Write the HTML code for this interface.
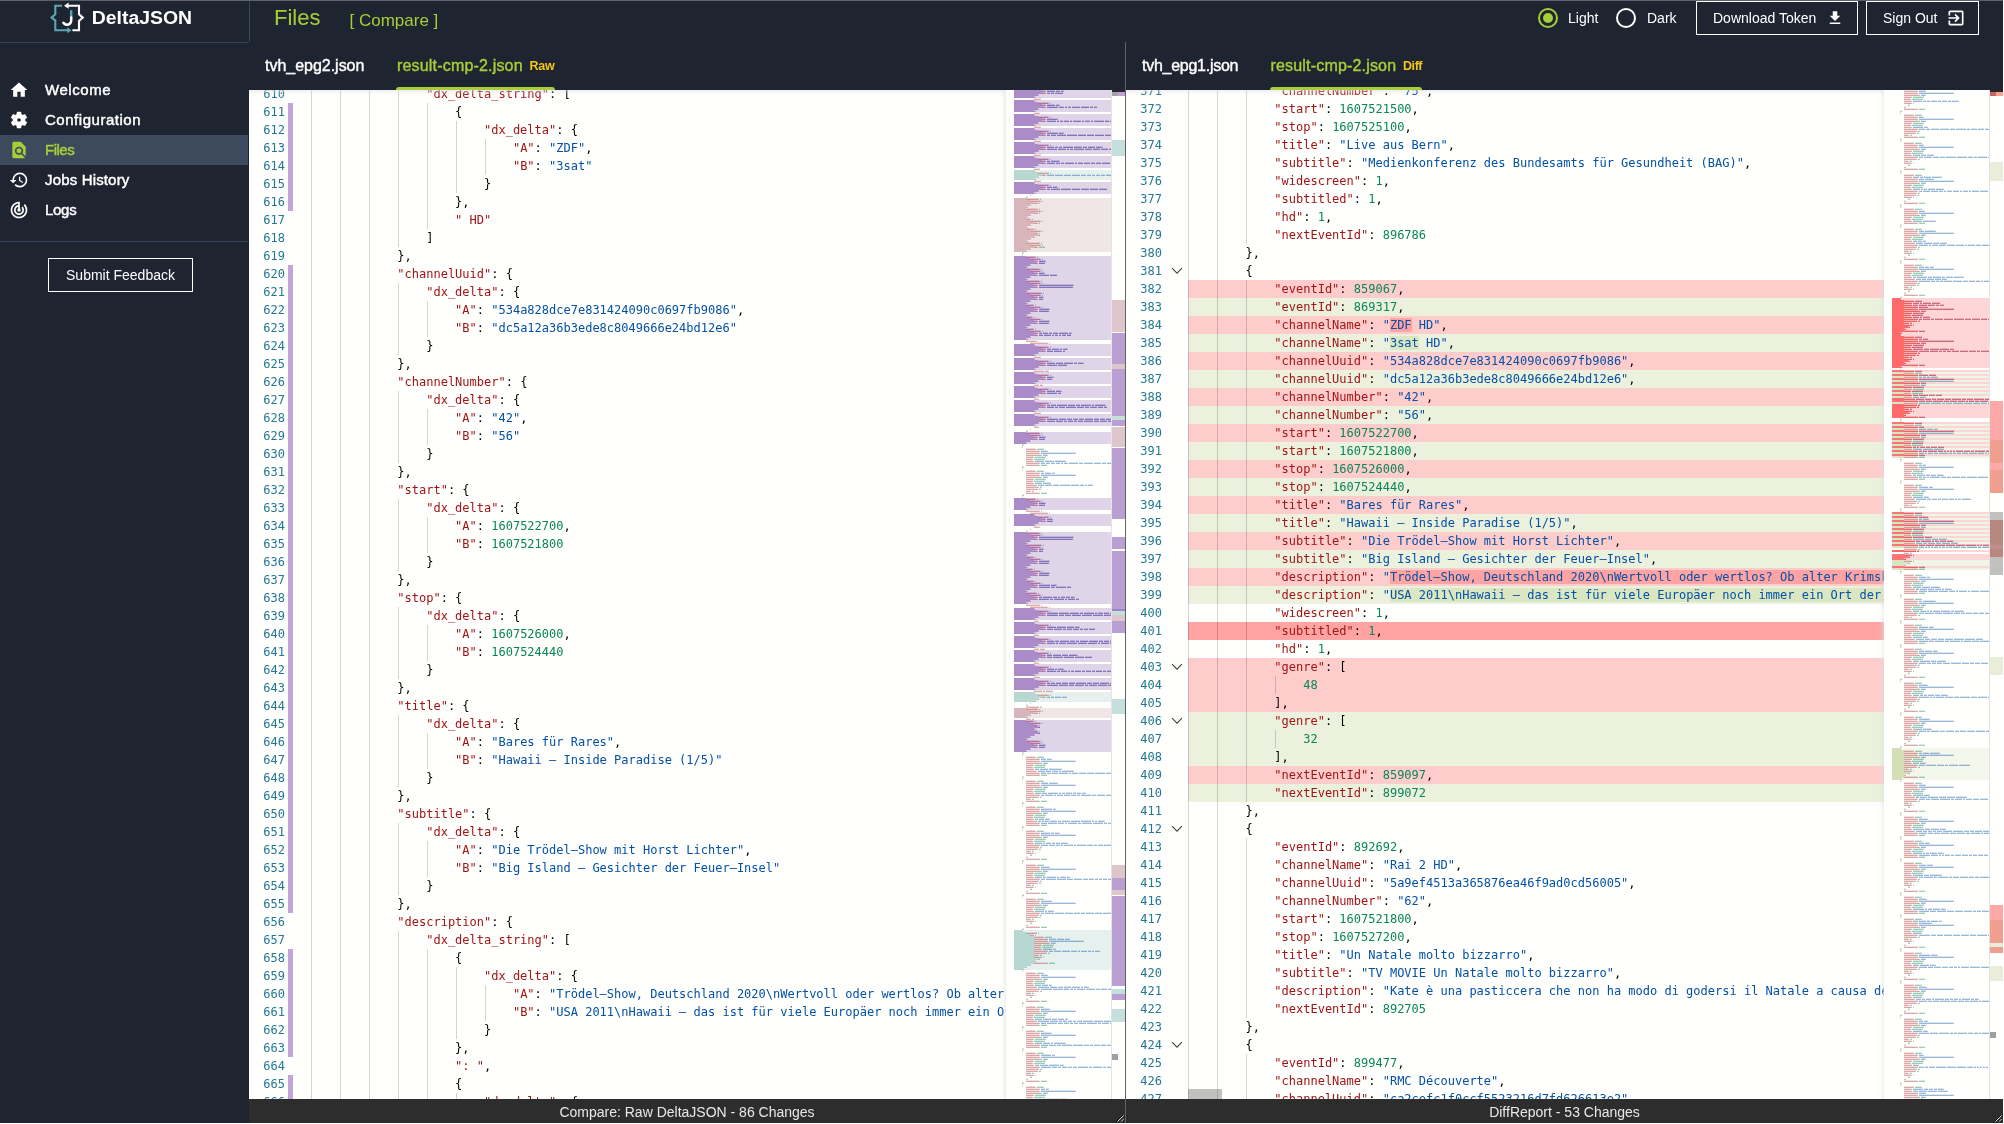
<!DOCTYPE html>
<html lang="en"><head><meta charset="utf-8"><title>DeltaJSON</title>
<style>
*{box-sizing:border-box;margin:0;padding:0}
html,body{width:2004px;height:1124px;overflow:hidden;background:#1e2430}
body{position:relative;font-family:"Liberation Sans",sans-serif;color:#fff}
.abs{position:absolute}
#topline{position:absolute;left:0;top:0;width:2003px;height:1px;background:#5d626c}
#bottomline{position:absolute;left:0;top:1122.7px;width:2004px;height:1.3px;background:#fff}
#sidebar{position:absolute;left:0;top:1px;width:248px;height:1123px;background:#1e2430}
#sb-hr1{position:absolute;left:0;top:41px;width:248px;height:1px;background:#36455b}
#sb-hr2{position:absolute;left:0;top:240px;width:248px;height:1px;background:#36455b}
#hd-vl{position:absolute;left:249px;top:1px;width:1px;height:41px;background:#3b475a}
#logo-t{position:absolute;left:91.5px;top:6px;font-size:17.5px;font-weight:bold;letter-spacing:0;line-height:24px;white-space:nowrap;transform:scaleX(1.108);transform-origin:0 0}
.nav{position:absolute;left:0;width:248px;height:30px}
.nav.act{background:#3d4a5d}
.nav span{position:absolute;left:45px;top:0;line-height:30px;font-size:15px;white-space:nowrap;-webkit-text-stroke:0.45px currentColor}
.nav.act span{color:#a6ce39}
.nav svg{position:absolute;left:9px;top:5px}
#fb{position:absolute;left:48px;top:257px;width:145px;height:34px;border:1px solid #fff;font-size:14px;line-height:32px;text-align:center;color:#fff}
#h-files{position:absolute;left:274px;top:4px;font-size:22px;line-height:28px;color:#a6ce39}
#h-cmp{position:absolute;left:349.5px;top:10px;font-size:17px;line-height:22px;color:#a6ce39;white-space:nowrap}
.rad{position:absolute;top:8px;width:20px;height:20px;border-radius:50%;border:2px solid #fff}
.rad.on{border-color:#a6ce39}
.rad.on::after{content:"";position:absolute;left:3px;top:3px;width:10px;height:10px;border-radius:50%;background:#a6ce39}
.hl{position:absolute;top:10px;font-size:14px;line-height:16px;color:#fff}
.hb{position:absolute;top:1px;height:34px;border:1px solid #fff;font-size:14px;line-height:32px;color:#fff;white-space:nowrap}
.hb span{position:absolute;top:0}
.tab{position:absolute;top:52px;font-size:16px;line-height:28px;white-space:nowrap;color:#fff;-webkit-text-stroke:0.4px currentColor}
.tab.g{color:#a6ce39}
.tab.y{color:#f5c518;font-size:12.5px;font-weight:bold;-webkit-text-stroke:0;top:52.4px}
.tul{position:absolute;top:87px;height:3px;background:#a6ce39;border-radius:3px 3px 0 0}
#vdiv{position:absolute;left:1125px;top:42px;width:1px;height:1081px;background:#626262}
#rdiv{position:absolute;left:2003px;top:0;width:1px;height:1124px;background:#fff}
.ed{position:absolute;top:90px;height:1009px;background:#fffffe;overflow:hidden;font-family:"DejaVu Sans Mono","Liberation Mono",monospace;font-size:12px;line-height:18px;color:#000}
.ed .ln{position:absolute;left:0;height:18px;text-align:right;color:#237893;white-space:pre}
.ed .cl{position:absolute;height:18px;white-space:pre;overflow:hidden}
.ed .ig{position:absolute;top:0;width:1px;height:18px;background:rgba(0,0,0,.17)}
.ed .tx{position:relative;left:-0.4px}
.k{color:#a31515}.s{color:#0451a5}.n{color:#098658}
.ld{background:#ffcccc}.li{background:#ebf1dd}.lD{background:#ffa3a3}
.cd{background:#ffa3a3}.ci{background:#dbe6c2}
#edL .ln{width:36px}
#edL .cl{left:62px;width:695px}
#edL .pb{position:absolute;left:39px;width:5px;height:18px;background:#c3a5d8}
#edR .ln{width:36px}
#edR .cl{left:62px;width:696px}
#edR .fa{position:absolute;left:45px}
.shadow-top{position:absolute;left:0;top:0;height:6px;box-shadow:#ddd 0 6px 6px -6px inset}
.mm{position:absolute;top:0;height:1009px;background:#fffffe}
.mmsh{position:absolute;top:0;width:6px;height:1009px;box-shadow:#ddd -6px 0 6px -6px inset}
.ov{position:absolute;top:0;width:14px;height:1009px;background:#fffffe;border-left:1px solid #e4e4e4}
.ov i,.mm i{position:absolute;display:block}
.sbar{position:absolute;top:1099px;height:23.5px;background:#2d2d2d;color:#e8e8e8;font-size:14px;line-height:26px;text-align:center}
.hsl{position:absolute;background:rgba(100,100,100,.4)}

#root{position:absolute;left:0;top:0;width:2004px;height:1124px;will-change:transform}

</style></head>
<body>
<div id="root">
<div id="sidebar">
  <svg class="abs" style="left:44px;top:-1px;will-change:transform" width="160" height="40" viewBox="44 0 160 40">
    <g fill="none" stroke-width="2.1" stroke-linejoin="miter">
      <path d="M62 5.7 H55.3 V14.2 L51.6 17.4 L55.3 20.6 V30.3 H68" stroke="#5ba6b3"/>
      <path d="M71.2 10.2 V18" stroke="#5ba6b3" stroke-width="2.4"/>
      <path d="M71.2 17.4 V20.6 a4.1 4.1 0 0 1 -4.1 4.1 a4.4 4.4 0 0 1 -3.7 -2" stroke="#fff" stroke-width="2.5" stroke-linecap="round"/>
      <path d="M68 5.7 H79 V14.2 L82.8 17.6 L79 21 V30.3 H72.4" stroke="#fff"/>
    </g>
    <path d="M71.6 30.3 l-4.4 -3 v6z" fill="#5ba6b3"/>
    <path d="M64 5.7 l4.6 -3.1 v6.2z" fill="#fff"/>
    <text x="91.8" y="24" font-family="Liberation Sans, sans-serif" font-weight="bold" font-size="17.5" fill="#fff" textLength="100.3" lengthAdjust="spacingAndGlyphs">DeltaJSON</text>
  </svg>
  <div id="sb-hr1"></div>
  <div class="nav" style="top:74px"><svg width="20" height="20" viewBox="0 0 24 24"><path fill="#fff" d="M10 20v-6h4v6h5v-8h3L12 3 2 12h3v8z"/></svg><span style="letter-spacing:.55px">Welcome</span></div>
  <div class="nav" style="top:104px"><svg width="20" height="20" viewBox="0 0 24 24"><path fill="#fff" fill-rule="evenodd" stroke="#fff" stroke-width="1.6" stroke-linejoin="round" d="M14.17 5.45 L13.85 2.89 L10.15 2.89 L9.83 5.45 L7.41 6.85 L5.03 5.84 L3.18 9.04 L5.24 10.60 L5.24 13.40 L3.18 14.96 L5.03 18.16 L7.41 17.15 L9.83 18.55 L10.15 21.11 L13.85 21.11 L14.17 18.55 L16.59 17.15 L18.97 18.16 L20.82 14.96 L18.76 13.40 L18.76 10.60 L20.82 9.04 L18.97 5.84 L16.59 6.85Z M9.00 12.00 a3.00 3.00 0 1 0 6.00 0 a3.00 3.00 0 1 0 -6.00 0Z"/></svg><span style="letter-spacing:.53px">Configuration</span></div>
  <div class="nav act" style="top:134px"><svg width="20" height="20" viewBox="0 0 24 24"><path fill="#a6ce39" d="M20 19.59V8l-6-6H6c-1.1 0-1.99.9-1.99 2L4 20c0 1.1.89 2 1.99 2H18c.45 0 .85-.15 1.19-.4l-4.43-4.43c-.8.52-1.74.83-2.76.83-2.76 0-5-2.24-5-5s2.24-5 5-5 5 2.24 5 5c0 1.02-.31 1.96-.83 2.75L20 19.59zM9 13c0 1.66 1.34 3 3 3s3-1.34 3-3-1.34-3-3-3-3 1.34-3 3z"/></svg><span style="letter-spacing:-.5px">Files</span></div>
  <div class="nav" style="top:164px"><svg width="20" height="20" viewBox="0 0 24 24"><path fill="#fff" d="M13 3a9 9 0 0 0-9 9H1l3.89 3.89.07.14L9 12H6c0-3.87 3.13-7 7-7s7 3.13 7 7-3.13 7-7 7c-1.93 0-3.68-.79-4.94-2.06l-1.42 1.42A8.954 8.954 0 0 0 13 21a9 9 0 0 0 0-18zm-1 5v5l4.28 2.54.72-1.21-3.5-2.08V8H12z"/></svg><span style="letter-spacing:.16px">Jobs History</span></div>
  <div class="nav" style="top:194px"><svg width="20" height="20" viewBox="0 0 24 24"><path fill="#fff" d="M19.07 4.93l-1.41 1.41A8.014 8.014 0 0 1 20 12c0 4.42-3.58 8-8 8s-8-3.58-8-8c0-4.08 3.05-7.44 7-7.93v2.02C8.160 6.570 6 9.030 6 12c0 3.310 2.690 6 6 6s6-2.690 6-6c0-1.660-.670-3.160-1.760-4.240l-1.410 1.410C15.550 9.900 16 10.900 16 12c0 2.210-1.790 4-4 4s-4-1.790-4-4c0-1.860 1.280-3.410 3-3.860v2.140c-.6.350-1 .980-1 1.720 0 1.100.9 2 2 2s2-.9 2-2c0-.740-.4-1.380-1-1.720V2h-1C6.480 2 2 6.480 2 12s4.480 10 10 10 10-4.480 10-10c0-2.760-1.120-5.260-2.930-7.070z"/></svg><span style="letter-spacing:-.3px">Logs</span></div>
  <div id="sb-hr2"></div>
  <div id="fb">Submit Feedback</div>
</div>
<div id="hd-vl"></div>
<div id="h-files">Files</div>
<div id="h-cmp">[ Compare ]</div>
<div class="rad on" style="left:1538px"></div><div class="hl" style="left:1568px">Light</div>
<div class="rad" style="left:1616px"></div><div class="hl" style="left:1647px">Dark</div>
<div class="hb" style="left:1696px;width:162px"><span style="left:16px">Download Token</span>
  <svg class="abs" style="left:129px;top:7px" width="18" height="18" viewBox="0 0 24 24"><path fill="#fff" d="M19 9h-4V3H9v6H5l7 7 7-7zM5 18v2h14v-2H5z"/></svg></div>
<div class="hb" style="left:1866px;width:113px"><span style="left:16px">Sign Out</span>
  <svg class="abs" style="left:79px;top:6px" width="20" height="20" viewBox="0 0 24 24"><path fill="#fff" d="M10.09 15.59L11.5 17l5-5-5-5-1.410 1.410L12.670 11H3v2h9.670l-2.580 2.590zM19 3H5c-1.110 0-2 .9-2 2v4h2V5h14v14H5v-4H3v4c0 1.100.890 2 2 2h14c1.100 0 2-.9 2-2V5c0-1.100-.9-2-2-2z"/></svg></div>

<div class="tab" style="left:265px;letter-spacing:-.02px">tvh_epg2.json</div>
<div class="tab g" style="left:397px;letter-spacing:.18px">result-cmp-2.json</div>
<div class="tab y" style="left:529.5px;letter-spacing:-.23px">Raw</div>
<div class="tul" style="left:396px;width:159px"></div>
<div class="tab" style="left:1142px;letter-spacing:-.26px">tvh_epg1.json</div>
<div class="tab g" style="left:1270.5px;letter-spacing:.18px">result-cmp-2.json</div>
<div class="tab y" style="left:1403px;letter-spacing:-.43px">Diff</div>
<div class="tul" style="left:1270px;width:152px"></div>

<div class="ed" id="edL" style="left:249px;width:876px">
<div class="ln" style="top:-5px">610</div>
<div class="cl" style="top:-5px"><i class="ig" style="left:0px"></i><i class="ig" style="left:29px"></i><i class="ig" style="left:58px"></i><i class="ig" style="left:87px"></i><span class="tx">                <span class="k">"dx_delta_string"</span>: [</span></div>
<div class="ln" style="top:13px">611</div>
<i class="pb" style="top:13px"></i>
<div class="cl" style="top:13px"><i class="ig" style="left:0px"></i><i class="ig" style="left:29px"></i><i class="ig" style="left:58px"></i><i class="ig" style="left:87px"></i><i class="ig" style="left:116px"></i><span class="tx">                    {</span></div>
<div class="ln" style="top:31px">612</div>
<i class="pb" style="top:31px"></i>
<div class="cl" style="top:31px"><i class="ig" style="left:0px"></i><i class="ig" style="left:29px"></i><i class="ig" style="left:58px"></i><i class="ig" style="left:87px"></i><i class="ig" style="left:116px"></i><i class="ig" style="left:145px"></i><span class="tx">                        <span class="k">"dx_delta"</span>: {</span></div>
<div class="ln" style="top:49px">613</div>
<i class="pb" style="top:49px"></i>
<div class="cl" style="top:49px"><i class="ig" style="left:0px"></i><i class="ig" style="left:29px"></i><i class="ig" style="left:58px"></i><i class="ig" style="left:87px"></i><i class="ig" style="left:116px"></i><i class="ig" style="left:145px"></i><i class="ig" style="left:174px"></i><span class="tx">                            <span class="k">"A"</span>: <span class="s">"ZDF"</span>,</span></div>
<div class="ln" style="top:67px">614</div>
<i class="pb" style="top:67px"></i>
<div class="cl" style="top:67px"><i class="ig" style="left:0px"></i><i class="ig" style="left:29px"></i><i class="ig" style="left:58px"></i><i class="ig" style="left:87px"></i><i class="ig" style="left:116px"></i><i class="ig" style="left:145px"></i><i class="ig" style="left:174px"></i><span class="tx">                            <span class="k">"B"</span>: <span class="s">"3sat"</span></span></div>
<div class="ln" style="top:85px">615</div>
<i class="pb" style="top:85px"></i>
<div class="cl" style="top:85px"><i class="ig" style="left:0px"></i><i class="ig" style="left:29px"></i><i class="ig" style="left:58px"></i><i class="ig" style="left:87px"></i><i class="ig" style="left:116px"></i><i class="ig" style="left:145px"></i><span class="tx">                        }</span></div>
<div class="ln" style="top:103px">616</div>
<i class="pb" style="top:103px"></i>
<div class="cl" style="top:103px"><i class="ig" style="left:0px"></i><i class="ig" style="left:29px"></i><i class="ig" style="left:58px"></i><i class="ig" style="left:87px"></i><i class="ig" style="left:116px"></i><span class="tx">                    },</span></div>
<div class="ln" style="top:121px">617</div>
<div class="cl" style="top:121px"><i class="ig" style="left:0px"></i><i class="ig" style="left:29px"></i><i class="ig" style="left:58px"></i><i class="ig" style="left:87px"></i><i class="ig" style="left:116px"></i><span class="tx">                    <span class="k">" HD"</span></span></div>
<div class="ln" style="top:139px">618</div>
<div class="cl" style="top:139px"><i class="ig" style="left:0px"></i><i class="ig" style="left:29px"></i><i class="ig" style="left:58px"></i><i class="ig" style="left:87px"></i><span class="tx">                ]</span></div>
<div class="ln" style="top:157px">619</div>
<div class="cl" style="top:157px"><i class="ig" style="left:0px"></i><i class="ig" style="left:29px"></i><i class="ig" style="left:58px"></i><span class="tx">            },</span></div>
<div class="ln" style="top:175px">620</div>
<i class="pb" style="top:175px"></i>
<div class="cl" style="top:175px"><i class="ig" style="left:0px"></i><i class="ig" style="left:29px"></i><i class="ig" style="left:58px"></i><span class="tx">            <span class="k">"channelUuid"</span>: {</span></div>
<div class="ln" style="top:193px">621</div>
<i class="pb" style="top:193px"></i>
<div class="cl" style="top:193px"><i class="ig" style="left:0px"></i><i class="ig" style="left:29px"></i><i class="ig" style="left:58px"></i><i class="ig" style="left:87px"></i><span class="tx">                <span class="k">"dx_delta"</span>: {</span></div>
<div class="ln" style="top:211px">622</div>
<i class="pb" style="top:211px"></i>
<div class="cl" style="top:211px"><i class="ig" style="left:0px"></i><i class="ig" style="left:29px"></i><i class="ig" style="left:58px"></i><i class="ig" style="left:87px"></i><i class="ig" style="left:116px"></i><span class="tx">                    <span class="k">"A"</span>: <span class="s">"534a828dce7e831424090c0697fb9086"</span>,</span></div>
<div class="ln" style="top:229px">623</div>
<i class="pb" style="top:229px"></i>
<div class="cl" style="top:229px"><i class="ig" style="left:0px"></i><i class="ig" style="left:29px"></i><i class="ig" style="left:58px"></i><i class="ig" style="left:87px"></i><i class="ig" style="left:116px"></i><span class="tx">                    <span class="k">"B"</span>: <span class="s">"dc5a12a36b3ede8c8049666e24bd12e6"</span></span></div>
<div class="ln" style="top:247px">624</div>
<i class="pb" style="top:247px"></i>
<div class="cl" style="top:247px"><i class="ig" style="left:0px"></i><i class="ig" style="left:29px"></i><i class="ig" style="left:58px"></i><i class="ig" style="left:87px"></i><span class="tx">                }</span></div>
<div class="ln" style="top:265px">625</div>
<i class="pb" style="top:265px"></i>
<div class="cl" style="top:265px"><i class="ig" style="left:0px"></i><i class="ig" style="left:29px"></i><i class="ig" style="left:58px"></i><span class="tx">            },</span></div>
<div class="ln" style="top:283px">626</div>
<i class="pb" style="top:283px"></i>
<div class="cl" style="top:283px"><i class="ig" style="left:0px"></i><i class="ig" style="left:29px"></i><i class="ig" style="left:58px"></i><span class="tx">            <span class="k">"channelNumber"</span>: {</span></div>
<div class="ln" style="top:301px">627</div>
<i class="pb" style="top:301px"></i>
<div class="cl" style="top:301px"><i class="ig" style="left:0px"></i><i class="ig" style="left:29px"></i><i class="ig" style="left:58px"></i><i class="ig" style="left:87px"></i><span class="tx">                <span class="k">"dx_delta"</span>: {</span></div>
<div class="ln" style="top:319px">628</div>
<i class="pb" style="top:319px"></i>
<div class="cl" style="top:319px"><i class="ig" style="left:0px"></i><i class="ig" style="left:29px"></i><i class="ig" style="left:58px"></i><i class="ig" style="left:87px"></i><i class="ig" style="left:116px"></i><span class="tx">                    <span class="k">"A"</span>: <span class="s">"42"</span>,</span></div>
<div class="ln" style="top:337px">629</div>
<i class="pb" style="top:337px"></i>
<div class="cl" style="top:337px"><i class="ig" style="left:0px"></i><i class="ig" style="left:29px"></i><i class="ig" style="left:58px"></i><i class="ig" style="left:87px"></i><i class="ig" style="left:116px"></i><span class="tx">                    <span class="k">"B"</span>: <span class="s">"56"</span></span></div>
<div class="ln" style="top:355px">630</div>
<i class="pb" style="top:355px"></i>
<div class="cl" style="top:355px"><i class="ig" style="left:0px"></i><i class="ig" style="left:29px"></i><i class="ig" style="left:58px"></i><i class="ig" style="left:87px"></i><span class="tx">                }</span></div>
<div class="ln" style="top:373px">631</div>
<i class="pb" style="top:373px"></i>
<div class="cl" style="top:373px"><i class="ig" style="left:0px"></i><i class="ig" style="left:29px"></i><i class="ig" style="left:58px"></i><span class="tx">            },</span></div>
<div class="ln" style="top:391px">632</div>
<i class="pb" style="top:391px"></i>
<div class="cl" style="top:391px"><i class="ig" style="left:0px"></i><i class="ig" style="left:29px"></i><i class="ig" style="left:58px"></i><span class="tx">            <span class="k">"start"</span>: {</span></div>
<div class="ln" style="top:409px">633</div>
<i class="pb" style="top:409px"></i>
<div class="cl" style="top:409px"><i class="ig" style="left:0px"></i><i class="ig" style="left:29px"></i><i class="ig" style="left:58px"></i><i class="ig" style="left:87px"></i><span class="tx">                <span class="k">"dx_delta"</span>: {</span></div>
<div class="ln" style="top:427px">634</div>
<i class="pb" style="top:427px"></i>
<div class="cl" style="top:427px"><i class="ig" style="left:0px"></i><i class="ig" style="left:29px"></i><i class="ig" style="left:58px"></i><i class="ig" style="left:87px"></i><i class="ig" style="left:116px"></i><span class="tx">                    <span class="k">"A"</span>: <span class="n">1607522700</span>,</span></div>
<div class="ln" style="top:445px">635</div>
<i class="pb" style="top:445px"></i>
<div class="cl" style="top:445px"><i class="ig" style="left:0px"></i><i class="ig" style="left:29px"></i><i class="ig" style="left:58px"></i><i class="ig" style="left:87px"></i><i class="ig" style="left:116px"></i><span class="tx">                    <span class="k">"B"</span>: <span class="n">1607521800</span></span></div>
<div class="ln" style="top:463px">636</div>
<i class="pb" style="top:463px"></i>
<div class="cl" style="top:463px"><i class="ig" style="left:0px"></i><i class="ig" style="left:29px"></i><i class="ig" style="left:58px"></i><i class="ig" style="left:87px"></i><span class="tx">                }</span></div>
<div class="ln" style="top:481px">637</div>
<i class="pb" style="top:481px"></i>
<div class="cl" style="top:481px"><i class="ig" style="left:0px"></i><i class="ig" style="left:29px"></i><i class="ig" style="left:58px"></i><span class="tx">            },</span></div>
<div class="ln" style="top:499px">638</div>
<i class="pb" style="top:499px"></i>
<div class="cl" style="top:499px"><i class="ig" style="left:0px"></i><i class="ig" style="left:29px"></i><i class="ig" style="left:58px"></i><span class="tx">            <span class="k">"stop"</span>: {</span></div>
<div class="ln" style="top:517px">639</div>
<i class="pb" style="top:517px"></i>
<div class="cl" style="top:517px"><i class="ig" style="left:0px"></i><i class="ig" style="left:29px"></i><i class="ig" style="left:58px"></i><i class="ig" style="left:87px"></i><span class="tx">                <span class="k">"dx_delta"</span>: {</span></div>
<div class="ln" style="top:535px">640</div>
<i class="pb" style="top:535px"></i>
<div class="cl" style="top:535px"><i class="ig" style="left:0px"></i><i class="ig" style="left:29px"></i><i class="ig" style="left:58px"></i><i class="ig" style="left:87px"></i><i class="ig" style="left:116px"></i><span class="tx">                    <span class="k">"A"</span>: <span class="n">1607526000</span>,</span></div>
<div class="ln" style="top:553px">641</div>
<i class="pb" style="top:553px"></i>
<div class="cl" style="top:553px"><i class="ig" style="left:0px"></i><i class="ig" style="left:29px"></i><i class="ig" style="left:58px"></i><i class="ig" style="left:87px"></i><i class="ig" style="left:116px"></i><span class="tx">                    <span class="k">"B"</span>: <span class="n">1607524440</span></span></div>
<div class="ln" style="top:571px">642</div>
<i class="pb" style="top:571px"></i>
<div class="cl" style="top:571px"><i class="ig" style="left:0px"></i><i class="ig" style="left:29px"></i><i class="ig" style="left:58px"></i><i class="ig" style="left:87px"></i><span class="tx">                }</span></div>
<div class="ln" style="top:589px">643</div>
<i class="pb" style="top:589px"></i>
<div class="cl" style="top:589px"><i class="ig" style="left:0px"></i><i class="ig" style="left:29px"></i><i class="ig" style="left:58px"></i><span class="tx">            },</span></div>
<div class="ln" style="top:607px">644</div>
<i class="pb" style="top:607px"></i>
<div class="cl" style="top:607px"><i class="ig" style="left:0px"></i><i class="ig" style="left:29px"></i><i class="ig" style="left:58px"></i><span class="tx">            <span class="k">"title"</span>: {</span></div>
<div class="ln" style="top:625px">645</div>
<i class="pb" style="top:625px"></i>
<div class="cl" style="top:625px"><i class="ig" style="left:0px"></i><i class="ig" style="left:29px"></i><i class="ig" style="left:58px"></i><i class="ig" style="left:87px"></i><span class="tx">                <span class="k">"dx_delta"</span>: {</span></div>
<div class="ln" style="top:643px">646</div>
<i class="pb" style="top:643px"></i>
<div class="cl" style="top:643px"><i class="ig" style="left:0px"></i><i class="ig" style="left:29px"></i><i class="ig" style="left:58px"></i><i class="ig" style="left:87px"></i><i class="ig" style="left:116px"></i><span class="tx">                    <span class="k">"A"</span>: <span class="s">"Bares für Rares"</span>,</span></div>
<div class="ln" style="top:661px">647</div>
<i class="pb" style="top:661px"></i>
<div class="cl" style="top:661px"><i class="ig" style="left:0px"></i><i class="ig" style="left:29px"></i><i class="ig" style="left:58px"></i><i class="ig" style="left:87px"></i><i class="ig" style="left:116px"></i><span class="tx">                    <span class="k">"B"</span>: <span class="s">"Hawaii – Inside Paradise (1/5)"</span></span></div>
<div class="ln" style="top:679px">648</div>
<i class="pb" style="top:679px"></i>
<div class="cl" style="top:679px"><i class="ig" style="left:0px"></i><i class="ig" style="left:29px"></i><i class="ig" style="left:58px"></i><i class="ig" style="left:87px"></i><span class="tx">                }</span></div>
<div class="ln" style="top:697px">649</div>
<i class="pb" style="top:697px"></i>
<div class="cl" style="top:697px"><i class="ig" style="left:0px"></i><i class="ig" style="left:29px"></i><i class="ig" style="left:58px"></i><span class="tx">            },</span></div>
<div class="ln" style="top:715px">650</div>
<i class="pb" style="top:715px"></i>
<div class="cl" style="top:715px"><i class="ig" style="left:0px"></i><i class="ig" style="left:29px"></i><i class="ig" style="left:58px"></i><span class="tx">            <span class="k">"subtitle"</span>: {</span></div>
<div class="ln" style="top:733px">651</div>
<i class="pb" style="top:733px"></i>
<div class="cl" style="top:733px"><i class="ig" style="left:0px"></i><i class="ig" style="left:29px"></i><i class="ig" style="left:58px"></i><i class="ig" style="left:87px"></i><span class="tx">                <span class="k">"dx_delta"</span>: {</span></div>
<div class="ln" style="top:751px">652</div>
<i class="pb" style="top:751px"></i>
<div class="cl" style="top:751px"><i class="ig" style="left:0px"></i><i class="ig" style="left:29px"></i><i class="ig" style="left:58px"></i><i class="ig" style="left:87px"></i><i class="ig" style="left:116px"></i><span class="tx">                    <span class="k">"A"</span>: <span class="s">"Die Trödel–Show mit Horst Lichter"</span>,</span></div>
<div class="ln" style="top:769px">653</div>
<i class="pb" style="top:769px"></i>
<div class="cl" style="top:769px"><i class="ig" style="left:0px"></i><i class="ig" style="left:29px"></i><i class="ig" style="left:58px"></i><i class="ig" style="left:87px"></i><i class="ig" style="left:116px"></i><span class="tx">                    <span class="k">"B"</span>: <span class="s">"Big Island – Gesichter der Feuer–Insel"</span></span></div>
<div class="ln" style="top:787px">654</div>
<i class="pb" style="top:787px"></i>
<div class="cl" style="top:787px"><i class="ig" style="left:0px"></i><i class="ig" style="left:29px"></i><i class="ig" style="left:58px"></i><i class="ig" style="left:87px"></i><span class="tx">                }</span></div>
<div class="ln" style="top:805px">655</div>
<i class="pb" style="top:805px"></i>
<div class="cl" style="top:805px"><i class="ig" style="left:0px"></i><i class="ig" style="left:29px"></i><i class="ig" style="left:58px"></i><span class="tx">            },</span></div>
<div class="ln" style="top:823px">656</div>
<div class="cl" style="top:823px"><i class="ig" style="left:0px"></i><i class="ig" style="left:29px"></i><i class="ig" style="left:58px"></i><span class="tx">            <span class="k">"description"</span>: {</span></div>
<div class="ln" style="top:841px">657</div>
<div class="cl" style="top:841px"><i class="ig" style="left:0px"></i><i class="ig" style="left:29px"></i><i class="ig" style="left:58px"></i><i class="ig" style="left:87px"></i><span class="tx">                <span class="k">"dx_delta_string"</span>: [</span></div>
<div class="ln" style="top:859px">658</div>
<i class="pb" style="top:859px"></i>
<div class="cl" style="top:859px"><i class="ig" style="left:0px"></i><i class="ig" style="left:29px"></i><i class="ig" style="left:58px"></i><i class="ig" style="left:87px"></i><i class="ig" style="left:116px"></i><span class="tx">                    {</span></div>
<div class="ln" style="top:877px">659</div>
<i class="pb" style="top:877px"></i>
<div class="cl" style="top:877px"><i class="ig" style="left:0px"></i><i class="ig" style="left:29px"></i><i class="ig" style="left:58px"></i><i class="ig" style="left:87px"></i><i class="ig" style="left:116px"></i><i class="ig" style="left:145px"></i><span class="tx">                        <span class="k">"dx_delta"</span>: {</span></div>
<div class="ln" style="top:895px">660</div>
<i class="pb" style="top:895px"></i>
<div class="cl" style="top:895px"><i class="ig" style="left:0px"></i><i class="ig" style="left:29px"></i><i class="ig" style="left:58px"></i><i class="ig" style="left:87px"></i><i class="ig" style="left:116px"></i><i class="ig" style="left:145px"></i><i class="ig" style="left:174px"></i><span class="tx">                            <span class="k">"A"</span>: <span class="s">"Trödel–Show, Deutschland 2020\nWertvoll oder wertlos? Ob alter Krimskrams oder echte Rarität"</span></span></div>
<div class="ln" style="top:913px">661</div>
<i class="pb" style="top:913px"></i>
<div class="cl" style="top:913px"><i class="ig" style="left:0px"></i><i class="ig" style="left:29px"></i><i class="ig" style="left:58px"></i><i class="ig" style="left:87px"></i><i class="ig" style="left:116px"></i><i class="ig" style="left:145px"></i><i class="ig" style="left:174px"></i><span class="tx">                            <span class="k">"B"</span>: <span class="s">"USA 2011\nHawaii – das ist für viele Europäer noch immer ein Ort der Sehnsucht"</span></span></div>
<div class="ln" style="top:931px">662</div>
<i class="pb" style="top:931px"></i>
<div class="cl" style="top:931px"><i class="ig" style="left:0px"></i><i class="ig" style="left:29px"></i><i class="ig" style="left:58px"></i><i class="ig" style="left:87px"></i><i class="ig" style="left:116px"></i><i class="ig" style="left:145px"></i><span class="tx">                        }</span></div>
<div class="ln" style="top:949px">663</div>
<i class="pb" style="top:949px"></i>
<div class="cl" style="top:949px"><i class="ig" style="left:0px"></i><i class="ig" style="left:29px"></i><i class="ig" style="left:58px"></i><i class="ig" style="left:87px"></i><i class="ig" style="left:116px"></i><span class="tx">                    },</span></div>
<div class="ln" style="top:967px">664</div>
<div class="cl" style="top:967px"><i class="ig" style="left:0px"></i><i class="ig" style="left:29px"></i><i class="ig" style="left:58px"></i><i class="ig" style="left:87px"></i><i class="ig" style="left:116px"></i><span class="tx">                    <span class="k">": "</span>,</span></div>
<div class="ln" style="top:985px">665</div>
<i class="pb" style="top:985px"></i>
<div class="cl" style="top:985px"><i class="ig" style="left:0px"></i><i class="ig" style="left:29px"></i><i class="ig" style="left:58px"></i><i class="ig" style="left:87px"></i><i class="ig" style="left:116px"></i><span class="tx">                    {</span></div>
<div class="ln" style="top:1003px">666</div>
<i class="pb" style="top:1003px"></i>
<div class="cl" style="top:1003px"><i class="ig" style="left:0px"></i><i class="ig" style="left:29px"></i><i class="ig" style="left:58px"></i><i class="ig" style="left:87px"></i><i class="ig" style="left:116px"></i><i class="ig" style="left:145px"></i><span class="tx">                        <span class="k">"dx_delta"</span>: {</span></div>
  <div class="shadow-top" style="width:876px"></div>
  <div class="mmsh" style="left:751px"></div>
  <div class="mm" style="left:757px;width:106px"><svg width="98" height="1009" viewBox="0 0 98 1009" style="position:absolute;left:8px;top:0">
<g shape-rendering="crispEdges">
<rect x="0" y="0" width="98" height="8" fill="#e0d4e9"/>
<rect x="0" y="0" width="28" height="4" fill="#ab8cc8"/>
<rect x="0" y="4" width="24" height="2" fill="#ab8cc8"/>
<rect x="0" y="6" width="20" height="2" fill="#ab8cc8"/>
<rect x="0" y="10" width="98" height="12" fill="#e0d4e9"/>
<rect x="0" y="10" width="20" height="2" fill="#ab8cc8"/>
<rect x="0" y="12" width="24" height="2" fill="#ab8cc8"/>
<rect x="0" y="14" width="28" height="4" fill="#ab8cc8"/>
<rect x="0" y="18" width="24" height="2" fill="#ab8cc8"/>
<rect x="0" y="20" width="20" height="2" fill="#ab8cc8"/>
<rect x="0" y="24" width="98" height="12" fill="#e0d4e9"/>
<rect x="0" y="24" width="20" height="2" fill="#ab8cc8"/>
<rect x="0" y="26" width="24" height="2" fill="#ab8cc8"/>
<rect x="0" y="28" width="28" height="4" fill="#ab8cc8"/>
<rect x="0" y="32" width="24" height="2" fill="#ab8cc8"/>
<rect x="0" y="34" width="20" height="2" fill="#ab8cc8"/>
<rect x="0" y="38" width="98" height="12" fill="#e0d4e9"/>
<rect x="0" y="38" width="20" height="2" fill="#ab8cc8"/>
<rect x="0" y="40" width="24" height="2" fill="#ab8cc8"/>
<rect x="0" y="42" width="28" height="4" fill="#ab8cc8"/>
<rect x="0" y="46" width="24" height="2" fill="#ab8cc8"/>
<rect x="0" y="48" width="20" height="2" fill="#ab8cc8"/>
<rect x="0" y="52" width="98" height="12" fill="#e0d4e9"/>
<rect x="0" y="52" width="20" height="2" fill="#ab8cc8"/>
<rect x="0" y="54" width="24" height="2" fill="#ab8cc8"/>
<rect x="0" y="56" width="28" height="4" fill="#ab8cc8"/>
<rect x="0" y="60" width="24" height="2" fill="#ab8cc8"/>
<rect x="0" y="62" width="20" height="2" fill="#ab8cc8"/>
<rect x="0" y="66" width="98" height="12" fill="#e0d4e9"/>
<rect x="0" y="66" width="20" height="2" fill="#ab8cc8"/>
<rect x="0" y="68" width="24" height="2" fill="#ab8cc8"/>
<rect x="0" y="70" width="28" height="4" fill="#ab8cc8"/>
<rect x="0" y="74" width="24" height="2" fill="#ab8cc8"/>
<rect x="0" y="76" width="20" height="2" fill="#ab8cc8"/>
<rect x="0" y="80" width="98" height="10" fill="#e6f1ef"/>
<rect x="0" y="80" width="20" height="2" fill="#b7d7d1"/>
<rect x="0" y="82" width="24" height="2" fill="#b7d7d1"/>
<rect x="0" y="84" width="28" height="2" fill="#b7d7d1"/>
<rect x="0" y="86" width="24" height="2" fill="#b7d7d1"/>
<rect x="0" y="88" width="20" height="2" fill="#b7d7d1"/>
<rect x="0" y="92" width="98" height="12" fill="#e0d4e9"/>
<rect x="0" y="92" width="20" height="2" fill="#ab8cc8"/>
<rect x="0" y="94" width="24" height="2" fill="#ab8cc8"/>
<rect x="0" y="96" width="28" height="4" fill="#ab8cc8"/>
<rect x="0" y="100" width="24" height="2" fill="#ab8cc8"/>
<rect x="0" y="102" width="20" height="2" fill="#ab8cc8"/>
<rect x="0" y="108" width="98" height="54" fill="#f0e5e7"/>
<rect x="0" y="108" width="12" height="2" fill="#d7b5ba"/>
<rect x="0" y="110" width="16" height="2" fill="#d7b5ba"/>
<rect x="0" y="112" width="20" height="2" fill="#d7b5ba"/>
<rect x="0" y="114" width="16" height="2" fill="#d7b5ba"/>
<rect x="0" y="116" width="12" height="4" fill="#d7b5ba"/>
<rect x="0" y="120" width="16" height="2" fill="#d7b5ba"/>
<rect x="0" y="122" width="20" height="2" fill="#d7b5ba"/>
<rect x="0" y="124" width="16" height="2" fill="#d7b5ba"/>
<rect x="0" y="126" width="12" height="4" fill="#d7b5ba"/>
<rect x="0" y="130" width="16" height="2" fill="#d7b5ba"/>
<rect x="0" y="132" width="20" height="2" fill="#d7b5ba"/>
<rect x="0" y="134" width="16" height="2" fill="#d7b5ba"/>
<rect x="0" y="136" width="12" height="4" fill="#d7b5ba"/>
<rect x="0" y="140" width="16" height="2" fill="#d7b5ba"/>
<rect x="0" y="142" width="20" height="2" fill="#d7b5ba"/>
<rect x="0" y="144" width="24" height="2" fill="#d7b5ba"/>
<rect x="0" y="146" width="20" height="2" fill="#d7b5ba"/>
<rect x="0" y="148" width="16" height="2" fill="#d7b5ba"/>
<rect x="0" y="150" width="12" height="4" fill="#d7b5ba"/>
<rect x="0" y="154" width="16" height="2" fill="#d7b5ba"/>
<rect x="0" y="156" width="20" height="2" fill="#d7b5ba"/>
<rect x="0" y="158" width="16" height="2" fill="#d7b5ba"/>
<rect x="0" y="160" width="12" height="2" fill="#d7b5ba"/>
<rect x="0" y="166" width="98" height="84" fill="#e0d4e9"/>
<rect x="0" y="166" width="12" height="2" fill="#ab8cc8"/>
<rect x="0" y="168" width="16" height="2" fill="#ab8cc8"/>
<rect x="0" y="170" width="20" height="4" fill="#ab8cc8"/>
<rect x="0" y="174" width="16" height="2" fill="#ab8cc8"/>
<rect x="0" y="176" width="12" height="4" fill="#ab8cc8"/>
<rect x="0" y="180" width="16" height="2" fill="#ab8cc8"/>
<rect x="0" y="182" width="20" height="4" fill="#ab8cc8"/>
<rect x="0" y="186" width="16" height="2" fill="#ab8cc8"/>
<rect x="0" y="188" width="12" height="4" fill="#ab8cc8"/>
<rect x="0" y="192" width="16" height="2" fill="#ab8cc8"/>
<rect x="0" y="194" width="20" height="4" fill="#ab8cc8"/>
<rect x="0" y="198" width="16" height="2" fill="#ab8cc8"/>
<rect x="0" y="200" width="12" height="4" fill="#ab8cc8"/>
<rect x="0" y="204" width="16" height="2" fill="#ab8cc8"/>
<rect x="0" y="206" width="20" height="4" fill="#ab8cc8"/>
<rect x="0" y="210" width="16" height="2" fill="#ab8cc8"/>
<rect x="0" y="212" width="12" height="4" fill="#ab8cc8"/>
<rect x="0" y="216" width="16" height="2" fill="#ab8cc8"/>
<rect x="0" y="218" width="20" height="4" fill="#ab8cc8"/>
<rect x="0" y="222" width="16" height="2" fill="#ab8cc8"/>
<rect x="0" y="224" width="12" height="4" fill="#ab8cc8"/>
<rect x="0" y="228" width="16" height="2" fill="#ab8cc8"/>
<rect x="0" y="230" width="20" height="4" fill="#ab8cc8"/>
<rect x="0" y="234" width="16" height="2" fill="#ab8cc8"/>
<rect x="0" y="236" width="12" height="4" fill="#ab8cc8"/>
<rect x="0" y="240" width="16" height="2" fill="#ab8cc8"/>
<rect x="0" y="242" width="20" height="4" fill="#ab8cc8"/>
<rect x="0" y="246" width="16" height="2" fill="#ab8cc8"/>
<rect x="0" y="248" width="12" height="2" fill="#ab8cc8"/>
<rect x="0" y="254" width="98" height="12" fill="#e0d4e9"/>
<rect x="0" y="254" width="20" height="2" fill="#ab8cc8"/>
<rect x="0" y="256" width="24" height="2" fill="#ab8cc8"/>
<rect x="0" y="258" width="28" height="4" fill="#ab8cc8"/>
<rect x="0" y="262" width="24" height="2" fill="#ab8cc8"/>
<rect x="0" y="264" width="20" height="2" fill="#ab8cc8"/>
<rect x="0" y="268" width="98" height="12" fill="#e0d4e9"/>
<rect x="0" y="268" width="20" height="2" fill="#ab8cc8"/>
<rect x="0" y="270" width="24" height="2" fill="#ab8cc8"/>
<rect x="0" y="272" width="28" height="4" fill="#ab8cc8"/>
<rect x="0" y="276" width="24" height="2" fill="#ab8cc8"/>
<rect x="0" y="278" width="20" height="2" fill="#ab8cc8"/>
<rect x="0" y="282" width="98" height="12" fill="#e0d4e9"/>
<rect x="0" y="282" width="20" height="2" fill="#ab8cc8"/>
<rect x="0" y="284" width="24" height="2" fill="#ab8cc8"/>
<rect x="0" y="286" width="28" height="4" fill="#ab8cc8"/>
<rect x="0" y="290" width="24" height="2" fill="#ab8cc8"/>
<rect x="0" y="292" width="20" height="2" fill="#ab8cc8"/>
<rect x="0" y="296" width="98" height="12" fill="#e0d4e9"/>
<rect x="0" y="296" width="20" height="2" fill="#ab8cc8"/>
<rect x="0" y="298" width="24" height="2" fill="#ab8cc8"/>
<rect x="0" y="300" width="28" height="4" fill="#ab8cc8"/>
<rect x="0" y="304" width="24" height="2" fill="#ab8cc8"/>
<rect x="0" y="306" width="20" height="2" fill="#ab8cc8"/>
<rect x="0" y="310" width="98" height="12" fill="#e0d4e9"/>
<rect x="0" y="310" width="20" height="2" fill="#ab8cc8"/>
<rect x="0" y="312" width="24" height="2" fill="#ab8cc8"/>
<rect x="0" y="314" width="28" height="4" fill="#ab8cc8"/>
<rect x="0" y="318" width="24" height="2" fill="#ab8cc8"/>
<rect x="0" y="320" width="20" height="2" fill="#ab8cc8"/>
<rect x="0" y="324" width="98" height="12" fill="#e0d4e9"/>
<rect x="0" y="324" width="20" height="2" fill="#ab8cc8"/>
<rect x="0" y="326" width="24" height="2" fill="#ab8cc8"/>
<rect x="0" y="328" width="28" height="4" fill="#ab8cc8"/>
<rect x="0" y="332" width="24" height="2" fill="#ab8cc8"/>
<rect x="0" y="334" width="20" height="2" fill="#ab8cc8"/>
<rect x="0" y="342" width="98" height="12" fill="#e0d4e9"/>
<rect x="0" y="342" width="12" height="2" fill="#ab8cc8"/>
<rect x="0" y="344" width="16" height="2" fill="#ab8cc8"/>
<rect x="0" y="346" width="20" height="4" fill="#ab8cc8"/>
<rect x="0" y="350" width="16" height="2" fill="#ab8cc8"/>
<rect x="0" y="352" width="12" height="2" fill="#ab8cc8"/>
<rect x="0" y="408" width="98" height="12" fill="#e0d4e9"/>
<rect x="0" y="408" width="12" height="2" fill="#ab8cc8"/>
<rect x="0" y="410" width="16" height="2" fill="#ab8cc8"/>
<rect x="0" y="412" width="20" height="4" fill="#ab8cc8"/>
<rect x="0" y="416" width="16" height="2" fill="#ab8cc8"/>
<rect x="0" y="418" width="12" height="2" fill="#ab8cc8"/>
<rect x="0" y="424" width="98" height="12" fill="#e0d4e9"/>
<rect x="0" y="424" width="20" height="2" fill="#ab8cc8"/>
<rect x="0" y="426" width="24" height="2" fill="#ab8cc8"/>
<rect x="0" y="428" width="28" height="4" fill="#ab8cc8"/>
<rect x="0" y="432" width="24" height="2" fill="#ab8cc8"/>
<rect x="0" y="434" width="20" height="2" fill="#ab8cc8"/>
<rect x="0" y="442" width="98" height="72" fill="#e0d4e9"/>
<rect x="0" y="442" width="12" height="2" fill="#ab8cc8"/>
<rect x="0" y="444" width="16" height="2" fill="#ab8cc8"/>
<rect x="0" y="446" width="20" height="4" fill="#ab8cc8"/>
<rect x="0" y="450" width="16" height="2" fill="#ab8cc8"/>
<rect x="0" y="452" width="12" height="4" fill="#ab8cc8"/>
<rect x="0" y="456" width="16" height="2" fill="#ab8cc8"/>
<rect x="0" y="458" width="20" height="4" fill="#ab8cc8"/>
<rect x="0" y="462" width="16" height="2" fill="#ab8cc8"/>
<rect x="0" y="464" width="12" height="4" fill="#ab8cc8"/>
<rect x="0" y="468" width="16" height="2" fill="#ab8cc8"/>
<rect x="0" y="470" width="20" height="4" fill="#ab8cc8"/>
<rect x="0" y="474" width="16" height="2" fill="#ab8cc8"/>
<rect x="0" y="476" width="12" height="4" fill="#ab8cc8"/>
<rect x="0" y="480" width="16" height="2" fill="#ab8cc8"/>
<rect x="0" y="482" width="20" height="4" fill="#ab8cc8"/>
<rect x="0" y="486" width="16" height="2" fill="#ab8cc8"/>
<rect x="0" y="488" width="12" height="4" fill="#ab8cc8"/>
<rect x="0" y="492" width="16" height="2" fill="#ab8cc8"/>
<rect x="0" y="494" width="20" height="4" fill="#ab8cc8"/>
<rect x="0" y="498" width="16" height="2" fill="#ab8cc8"/>
<rect x="0" y="500" width="12" height="4" fill="#ab8cc8"/>
<rect x="0" y="504" width="16" height="2" fill="#ab8cc8"/>
<rect x="0" y="506" width="20" height="4" fill="#ab8cc8"/>
<rect x="0" y="510" width="16" height="2" fill="#ab8cc8"/>
<rect x="0" y="512" width="12" height="2" fill="#ab8cc8"/>
<rect x="0" y="518" width="98" height="12" fill="#e0d4e9"/>
<rect x="0" y="518" width="20" height="2" fill="#ab8cc8"/>
<rect x="0" y="520" width="24" height="2" fill="#ab8cc8"/>
<rect x="0" y="522" width="28" height="4" fill="#ab8cc8"/>
<rect x="0" y="526" width="24" height="2" fill="#ab8cc8"/>
<rect x="0" y="528" width="20" height="2" fill="#ab8cc8"/>
<rect x="0" y="532" width="98" height="12" fill="#e0d4e9"/>
<rect x="0" y="532" width="20" height="2" fill="#ab8cc8"/>
<rect x="0" y="534" width="24" height="2" fill="#ab8cc8"/>
<rect x="0" y="536" width="28" height="4" fill="#ab8cc8"/>
<rect x="0" y="540" width="24" height="2" fill="#ab8cc8"/>
<rect x="0" y="542" width="20" height="2" fill="#ab8cc8"/>
<rect x="0" y="546" width="98" height="12" fill="#e0d4e9"/>
<rect x="0" y="546" width="20" height="2" fill="#ab8cc8"/>
<rect x="0" y="548" width="24" height="2" fill="#ab8cc8"/>
<rect x="0" y="550" width="28" height="4" fill="#ab8cc8"/>
<rect x="0" y="554" width="24" height="2" fill="#ab8cc8"/>
<rect x="0" y="556" width="20" height="2" fill="#ab8cc8"/>
<rect x="0" y="560" width="98" height="12" fill="#e0d4e9"/>
<rect x="0" y="560" width="20" height="2" fill="#ab8cc8"/>
<rect x="0" y="562" width="24" height="2" fill="#ab8cc8"/>
<rect x="0" y="564" width="28" height="4" fill="#ab8cc8"/>
<rect x="0" y="568" width="24" height="2" fill="#ab8cc8"/>
<rect x="0" y="570" width="20" height="2" fill="#ab8cc8"/>
<rect x="0" y="574" width="98" height="12" fill="#e0d4e9"/>
<rect x="0" y="574" width="20" height="2" fill="#ab8cc8"/>
<rect x="0" y="576" width="24" height="2" fill="#ab8cc8"/>
<rect x="0" y="578" width="28" height="4" fill="#ab8cc8"/>
<rect x="0" y="582" width="24" height="2" fill="#ab8cc8"/>
<rect x="0" y="584" width="20" height="2" fill="#ab8cc8"/>
<rect x="0" y="588" width="98" height="12" fill="#e0d4e9"/>
<rect x="0" y="588" width="20" height="2" fill="#ab8cc8"/>
<rect x="0" y="590" width="24" height="2" fill="#ab8cc8"/>
<rect x="0" y="592" width="28" height="4" fill="#ab8cc8"/>
<rect x="0" y="596" width="24" height="2" fill="#ab8cc8"/>
<rect x="0" y="598" width="20" height="2" fill="#ab8cc8"/>
<rect x="0" y="602" width="98" height="10" fill="#e6f1ef"/>
<rect x="0" y="602" width="20" height="2" fill="#b7d7d1"/>
<rect x="0" y="604" width="24" height="2" fill="#b7d7d1"/>
<rect x="0" y="606" width="28" height="2" fill="#b7d7d1"/>
<rect x="0" y="608" width="24" height="2" fill="#b7d7d1"/>
<rect x="0" y="610" width="20" height="2" fill="#b7d7d1"/>
<rect x="0" y="618" width="98" height="10" fill="#f0e5e7"/>
<rect x="0" y="618" width="12" height="2" fill="#d7b5ba"/>
<rect x="0" y="620" width="16" height="2" fill="#d7b5ba"/>
<rect x="0" y="622" width="20" height="2" fill="#d7b5ba"/>
<rect x="0" y="624" width="16" height="2" fill="#d7b5ba"/>
<rect x="0" y="626" width="12" height="2" fill="#d7b5ba"/>
<rect x="0" y="630" width="98" height="32" fill="#e0d4e9"/>
<rect x="0" y="630" width="12" height="2" fill="#ab8cc8"/>
<rect x="0" y="632" width="16" height="2" fill="#ab8cc8"/>
<rect x="0" y="634" width="20" height="2" fill="#ab8cc8"/>
<rect x="0" y="636" width="24" height="2" fill="#ab8cc8"/>
<rect x="0" y="638" width="20" height="4" fill="#ab8cc8"/>
<rect x="0" y="642" width="24" height="2" fill="#ab8cc8"/>
<rect x="0" y="644" width="20" height="2" fill="#ab8cc8"/>
<rect x="0" y="646" width="16" height="2" fill="#ab8cc8"/>
<rect x="0" y="648" width="12" height="4" fill="#ab8cc8"/>
<rect x="0" y="652" width="16" height="2" fill="#ab8cc8"/>
<rect x="0" y="654" width="20" height="4" fill="#ab8cc8"/>
<rect x="0" y="658" width="16" height="2" fill="#ab8cc8"/>
<rect x="0" y="660" width="12" height="2" fill="#ab8cc8"/>
<rect x="0" y="840" width="98" height="40" fill="#e6f1ef"/>
<rect x="0" y="840" width="8" height="2" fill="#b7d7d1"/>
<rect x="0" y="842" width="12" height="2" fill="#b7d7d1"/>
<rect x="0" y="844" width="16" height="2" fill="#b7d7d1"/>
<rect x="0" y="846" width="20" height="22" fill="#b7d7d1"/>
<rect x="0" y="868" width="24" height="2" fill="#b7d7d1"/>
<rect x="0" y="870" width="20" height="4" fill="#b7d7d1"/>
<rect x="0" y="874" width="16" height="2" fill="#b7d7d1"/>
<rect x="0" y="876" width="12" height="2" fill="#b7d7d1"/>
<rect x="0" y="878" width="8" height="2" fill="#b7d7d1"/>
</g>
<path d="M28 1.2h3M28 3.2h3M24 13.2h10M28 15.2h3M28 17.2h3M24 27.2h10M28 29.2h3M28 31.2h3M24 41.2h10M28 43.2h3M28 45.2h3M24 55.2h10M28 57.2h3M28 59.2h3M24 69.2h10M28 71.2h3M28 73.2h3M24 95.2h10M28 97.2h3M28 99.2h3M12 167.2h9M16 169.2h10M20 171.2h3M20 173.2h3M12 179.2h13M16 181.2h10M20 183.2h3M20 185.2h3M12 191.2h13M16 193.2h10M20 195.2h3M20 197.2h3M12 203.2h15M16 205.2h10M20 207.2h3M20 209.2h3M12 215.2h7M16 217.2h10M20 219.2h3M20 221.2h3M12 227.2h6M16 229.2h10M20 231.2h3M20 233.2h3M12 239.2h7M16 241.2h10M20 243.2h3M20 245.2h3M24 257.2h10M28 259.2h3M28 261.2h3M24 271.2h10M28 273.2h3M28 275.2h3M24 285.2h10M28 287.2h3M28 289.2h3M24 299.2h10M28 301.2h3M28 303.2h3M24 313.2h10M28 315.2h3M28 317.2h3M24 327.2h10M28 329.2h3M28 331.2h3M12 343.2h13M16 345.2h10M20 347.2h3M20 349.2h3M12 409.2h9M16 411.2h10M20 413.2h3M20 415.2h3M24 427.2h10M28 429.2h3M28 431.2h3M12 443.2h13M16 445.2h10M20 447.2h3M20 449.2h3M12 455.2h15M16 457.2h10M20 459.2h3M20 461.2h3M12 467.2h7M16 469.2h10M20 471.2h3M20 473.2h3M12 479.2h6M16 481.2h10M20 483.2h3M20 485.2h3M12 491.2h7M16 493.2h10M20 495.2h3M20 497.2h3M12 503.2h10M16 505.2h10M20 507.2h3M20 509.2h3M24 521.2h10M28 523.2h3M28 525.2h3M24 535.2h10M28 537.2h3M28 539.2h3M24 549.2h10M28 551.2h3M28 553.2h3M24 563.2h10M28 565.2h3M28 567.2h3M24 577.2h10M28 579.2h3M28 581.2h3M24 591.2h10M28 593.2h3M28 595.2h3M12 631.2h7M16 633.2h10M20 635.2h3M20 641.2h3M12 651.2h13M16 653.2h10M20 655.2h3M20 657.2h3" stroke="#8a1560" stroke-opacity="0.70" stroke-width="1.05" fill="none"/>
<path d="M31 1.2h1M49 1.2h1M31 3.2h1M24 5.2h1M20 7.2h2M26 9.2h1M20 11.2h1M34 13.2h1M36 13.2h1M31 15.2h1M45 15.2h1M31 17.2h1M24 19.2h1M20 21.2h2M25 23.2h1M20 25.2h1M34 27.2h1M36 27.2h1M31 29.2h1M43 29.2h1M31 31.2h1M24 33.2h1M20 35.2h2M26 37.2h1M20 39.2h1M34 41.2h1M36 41.2h1M31 43.2h1M49 43.2h1M31 45.2h1M24 47.2h1M20 49.2h2M26 51.2h1M20 53.2h1M34 55.2h1M36 55.2h1M31 57.2h1M88 57.2h1M31 59.2h1M24 61.2h1M20 63.2h2M26 65.2h1M20 67.2h1M34 69.2h1M36 69.2h1M31 71.2h1M45 71.2h1M31 73.2h1M24 75.2h1M20 77.2h2M25 79.2h1M20 81.2h1M34 83.2h1M36 83.2h1M31 85.2h1M24 87.2h1M20 89.2h2M26 91.2h1M20 93.2h1M34 95.2h1M36 95.2h1M31 97.2h1M43 97.2h1M31 99.2h1M24 101.2h1M20 103.2h2M16 105.2h1M12 107.2h2M24 109.2h1M26 109.2h1M26 111.2h1M28 111.2h1M23 113.2h1M16 115.2h1M12 117.2h2M23 119.2h1M25 119.2h1M26 121.2h1M28 121.2h1M23 123.2h1M16 125.2h1M12 127.2h2M16 129.2h1M18 129.2h1M26 131.2h1M28 131.2h1M23 133.2h1M16 135.2h1M12 137.2h2M19 139.2h1M21 139.2h1M26 141.2h1M28 141.2h1M23 143.2h1M25 143.2h1M20 147.2h1M16 149.2h1M12 151.2h2M25 153.2h1M27 153.2h1M26 155.2h1M28 155.2h1M23 157.2h1M16 159.2h1M12 161.2h1M8 163.2h2M8 165.2h1M21 167.2h1M23 167.2h1M26 169.2h1M28 169.2h1M23 171.2h1M31 171.2h1M23 173.2h1M16 175.2h1M12 177.2h2M25 179.2h1M27 179.2h1M26 181.2h1M28 181.2h1M23 183.2h1M30 183.2h1M23 185.2h1M16 187.2h1M12 189.2h2M25 191.2h1M27 191.2h1M26 193.2h1M28 193.2h1M23 195.2h1M59 195.2h1M23 197.2h1M16 199.2h1M12 201.2h2M27 203.2h1M29 203.2h1M26 205.2h1M28 205.2h1M23 207.2h1M29 207.2h1M23 209.2h1M16 211.2h1M12 213.2h2M19 215.2h1M21 215.2h1M26 217.2h1M28 217.2h1M23 219.2h1M35 219.2h1M23 221.2h1M16 223.2h1M12 225.2h2M18 227.2h1M20 227.2h1M26 229.2h1M28 229.2h1M23 231.2h1M35 231.2h1M23 233.2h1M16 235.2h1M12 237.2h2M19 239.2h1M21 239.2h1M26 241.2h1M28 241.2h1M23 243.2h1M57 243.2h1M23 245.2h1M16 247.2h1M12 249.2h2M22 251.2h1M24 251.2h1M33 253.2h1M35 253.2h1M20 255.2h1M34 257.2h1M36 257.2h1M31 259.2h1M53 259.2h1M31 261.2h1M24 263.2h1M20 265.2h2M26 267.2h1M20 269.2h1M34 271.2h1M36 271.2h1M31 273.2h1M69 273.2h1M31 275.2h1M24 277.2h1M20 279.2h2M34 281.2h1M20 283.2h1M34 285.2h1M36 285.2h1M31 287.2h1M39 287.2h1M31 289.2h1M24 291.2h1M20 293.2h2M28 295.2h1M20 297.2h1M34 299.2h1M36 299.2h1M31 301.2h1M47 301.2h1M31 303.2h1M24 305.2h1M20 307.2h2M24 309.2h1M20 311.2h1M34 313.2h1M36 313.2h1M31 315.2h1M91 315.2h1M31 317.2h1M24 319.2h1M20 321.2h2M26 323.2h1M20 325.2h1M34 327.2h1M36 327.2h1M31 329.2h1M31 331.2h1M24 333.2h1M20 335.2h2M24 337.2h1M16 339.2h1M12 341.2h2M25 343.2h1M27 343.2h1M26 345.2h1M28 345.2h1M23 347.2h1M31 347.2h1M23 349.2h1M16 351.2h1M12 353.2h1M8 355.2h2M8 357.2h1M21 359.2h1M29 359.2h1M25 361.2h1M33 361.2h1M25 363.2h1M61 363.2h1M27 365.2h1M33 365.2h1M19 367.2h1M31 367.2h1M18 369.2h1M30 369.2h1M19 371.2h1M51 371.2h1M25 373.2h1M25 375.2h1M8 377.2h2M8 379.2h1M21 381.2h1M29 381.2h1M25 383.2h1M40 383.2h1M25 385.2h1M61 385.2h1M27 387.2h1M33 387.2h1M19 389.2h1M31 389.2h1M18 391.2h1M30 391.2h1M19 393.2h1M36 393.2h1M22 395.2h1M78 395.2h1M24 397.2h1M27 397.2h1M23 399.2h1M26 399.2h1M16 401.2h1M19 401.2h1M25 403.2h1M8 405.2h2M8 407.2h1M21 409.2h1M23 409.2h1M26 411.2h1M28 411.2h1M23 413.2h1M31 413.2h1M23 415.2h1M16 417.2h1M12 419.2h2M25 421.2h1M27 421.2h1M33 423.2h1M35 423.2h1M20 425.2h1M34 427.2h1M36 427.2h1M31 429.2h1M38 429.2h1M31 431.2h1M24 433.2h1M20 435.2h2M25 437.2h1M16 439.2h1M12 441.2h2M25 443.2h1M27 443.2h1M26 445.2h1M28 445.2h1M23 447.2h1M59 447.2h1M23 449.2h1M16 451.2h1M12 453.2h2M27 455.2h1M29 455.2h1M26 457.2h1M28 457.2h1M23 459.2h1M29 459.2h1M23 461.2h1M16 463.2h1M12 465.2h2M19 467.2h1M21 467.2h1M26 469.2h1M28 469.2h1M23 471.2h1M35 471.2h1M23 473.2h1M16 475.2h1M12 477.2h2M18 479.2h1M20 479.2h1M26 481.2h1M28 481.2h1M23 483.2h1M35 483.2h1M23 485.2h1M16 487.2h1M12 489.2h2M19 491.2h1M21 491.2h1M26 493.2h1M28 493.2h1M23 495.2h1M42 495.2h1M23 497.2h1M16 499.2h1M12 501.2h2M22 503.2h1M24 503.2h1M26 505.2h1M28 505.2h1M23 507.2h1M60 507.2h1M23 509.2h1M16 511.2h1M12 513.2h2M25 515.2h1M27 515.2h1M33 517.2h1M35 517.2h1M20 519.2h1M34 521.2h1M36 521.2h1M31 523.2h1M31 525.2h1M24 527.2h1M20 529.2h2M24 531.2h1M20 533.2h1M34 535.2h1M36 535.2h1M31 537.2h1M65 537.2h1M31 539.2h1M24 541.2h1M20 543.2h2M24 545.2h1M20 547.2h1M34 549.2h1M36 549.2h1M31 551.2h1M31 553.2h1M24 555.2h1M20 557.2h2M30 559.2h1M20 561.2h1M34 563.2h1M36 563.2h1M31 565.2h1M63 565.2h1M31 567.2h1M24 569.2h1M20 571.2h2M24 573.2h1M20 575.2h1M34 577.2h1M36 577.2h1M31 579.2h1M49 579.2h1M31 581.2h1M24 583.2h1M20 585.2h2M25 587.2h1M20 589.2h1M34 591.2h1M36 591.2h1M31 593.2h1M31 595.2h1M24 597.2h1M20 599.2h2M38 601.2h1M20 603.2h1M34 605.2h1M36 605.2h1M31 607.2h1M24 609.2h1M20 611.2h2M16 613.2h1M12 615.2h2M24 617.2h1M27 617.2h1M23 619.2h1M25 619.2h1M26 621.2h1M28 621.2h1M23 623.2h1M16 625.2h1M12 627.2h2M16 629.2h1M19 629.2h1M19 631.2h1M21 631.2h1M26 633.2h1M28 633.2h1M23 635.2h1M25 635.2h1M20 639.2h2M23 641.2h1M25 641.2h1M20 645.2h1M16 647.2h1M12 649.2h2M25 651.2h1M27 651.2h1M26 653.2h1M28 653.2h1M23 655.2h1M31 655.2h1M23 657.2h1M16 659.2h1M12 661.2h1M8 663.2h2M8 665.2h1M21 667.2h1M29 667.2h1M25 669.2h1M37 669.2h1M25 671.2h1M61 671.2h1M27 673.2h1M33 673.2h1M19 675.2h1M31 675.2h1M18 677.2h1M30 677.2h1M19 679.2h1M47 679.2h1M22 681.2h1M59 681.2h1M25 683.2h1M25 685.2h1M8 687.2h2M8 689.2h1M21 691.2h1M29 691.2h1M25 693.2h1M43 693.2h1M25 695.2h1M61 695.2h1M27 697.2h1M33 697.2h1M19 699.2h1M31 699.2h1M18 701.2h1M30 701.2h1M19 703.2h1M71 703.2h1M25 705.2h1M24 707.2h1M27 707.2h1M16 709.2h1M19 709.2h1M25 711.2h1M8 713.2h2M8 715.2h1M21 717.2h1M29 717.2h1M25 719.2h1M41 719.2h1M25 721.2h1M61 721.2h1M27 723.2h1M33 723.2h1M19 725.2h1M31 725.2h1M18 727.2h1M30 727.2h1M19 729.2h1M35 729.2h1M22 731.2h1M90 731.2h1M25 733.2h1M25 735.2h1M8 737.2h2M8 739.2h1M21 741.2h1M29 741.2h1M25 743.2h1M45 743.2h1M25 745.2h1M61 745.2h1M27 747.2h1M33 747.2h1M19 749.2h1M31 749.2h1M18 751.2h1M30 751.2h1M19 753.2h1M53 753.2h1M25 755.2h1M24 757.2h1M27 757.2h1M23 759.2h1M26 759.2h1M16 761.2h1M19 761.2h1M19 763.2h1M21 763.2h1M12 767.2h2M25 769.2h1M8 771.2h2M8 773.2h1M21 775.2h1M29 775.2h1M25 777.2h1M35 777.2h1M25 779.2h1M61 779.2h1M27 781.2h1M33 781.2h1M19 783.2h1M31 783.2h1M18 785.2h1M30 785.2h1M19 787.2h1M55 787.2h1M25 789.2h1M24 791.2h1M27 791.2h1M23 793.2h1M26 793.2h1M16 795.2h1M19 795.2h1M19 797.2h1M21 797.2h1M12 801.2h2M25 803.2h1M8 805.2h2M8 807.2h1M21 809.2h1M29 809.2h1M25 811.2h1M37 811.2h1M25 813.2h1M61 813.2h1M27 815.2h1M33 815.2h1M19 817.2h1M31 817.2h1M18 819.2h1M30 819.2h1M19 821.2h1M39 821.2h1M25 823.2h1M24 825.2h1M27 825.2h1M23 827.2h1M26 827.2h1M16 829.2h1M19 829.2h1M19 831.2h1M21 831.2h1M12 835.2h2M25 837.2h1M8 839.2h2M8 841.2h1M22 843.2h1M24 843.2h1M19 845.2h1M21 845.2h1M29 847.2h1M37 847.2h1M33 849.2h1M55 849.2h1M33 851.2h1M69 851.2h1M35 853.2h1M41 853.2h1M27 855.2h1M39 855.2h1M26 857.2h1M38 857.2h1M27 859.2h1M41 859.2h1M33 861.2h1M85 861.2h1M32 863.2h1M35 863.2h1M24 865.2h1M27 865.2h1M27 867.2h1M29 867.2h1M20 871.2h2M33 873.2h1M16 875.2h1M12 877.2h1M8 879.2h2M8 881.2h1M21 883.2h1M29 883.2h1M25 885.2h1M33 885.2h1M25 887.2h1M61 887.2h1M27 889.2h1M33 889.2h1M19 891.2h1M31 891.2h1M18 893.2h1M30 893.2h1M19 895.2h1M37 895.2h1M22 897.2h1M74 897.2h1M25 899.2h1M24 901.2h1M27 901.2h1M16 903.2h1M19 903.2h1M19 905.2h1M21 905.2h1M12 909.2h2M25 911.2h1M8 913.2h2M8 915.2h1M21 917.2h1M29 917.2h1M25 919.2h1M35 919.2h1M25 921.2h1M61 921.2h1M27 923.2h1M33 923.2h1M19 925.2h1M31 925.2h1M18 927.2h1M30 927.2h1M19 929.2h1M53 929.2h1M22 931.2h1M25 933.2h1M25 935.2h1M8 937.2h2M8 939.2h1M21 941.2h1M29 941.2h1M25 943.2h1M37 943.2h1M25 945.2h1M61 945.2h1M27 947.2h1M33 947.2h1M19 949.2h1M31 949.2h1M18 951.2h1M30 951.2h1M19 953.2h1M51 953.2h1M25 955.2h1M25 957.2h1M8 959.2h2M8 961.2h1M21 963.2h1M29 963.2h1M25 965.2h1M40 965.2h1M25 967.2h1M61 967.2h1M27 969.2h1M33 969.2h1M19 971.2h1M31 971.2h1M18 973.2h1M30 973.2h1M19 975.2h1M49 975.2h1M25 977.2h1M24 979.2h1M27 979.2h1M23 981.2h1M26 981.2h1M16 983.2h1M19 983.2h1M19 985.2h1M21 985.2h1M12 989.2h2M25 991.2h1M8 993.2h2M8 995.2h1M21 997.2h1M29 997.2h1M25 999.2h1M34 999.2h1M25 1001.2h1M61 1001.2h1M27 1003.2h1M33 1003.2h1M19 1005.2h1M31 1005.2h1M18 1007.2h1M30 1007.2h1M19 1009.2h1M53 1009.2h1" stroke="#000000" stroke-opacity="0.30" stroke-width="1.05" fill="none"/>
<path d="M33 1.2h8M42 1.2h4M47 1.2h2M33 3.2h3M37 3.2h3M41 3.2h8M33 15.2h8M42 15.2h3M33 17.2h11M45 17.2h5M51 17.2h2M54 17.2h3M58 17.2h8M67 17.2h8M76 17.2h3M80 17.2h3M33 29.2h10M33 31.2h9M43 31.2h2M46 31.2h3M50 31.2h5M56 31.2h2M59 31.2h8M68 31.2h2M71 31.2h5M77 31.2h2M80 31.2h10M91 31.2h4M96 31.2h2M33 43.2h11M45 43.2h4M33 45.2h3M37 45.2h5M43 45.2h9M53 45.2h10M64 45.2h8M73 45.2h7M81 45.2h9M91 45.2h7M33 57.2h7M41 57.2h3M45 57.2h3M49 57.2h10M60 57.2h8M69 57.2h4M74 57.2h7M82 57.2h6M33 59.2h10M44 59.2h8M53 59.2h2M56 59.2h3M60 59.2h10M71 59.2h7M79 59.2h7M87 59.2h7M95 59.2h3M33 71.2h3M37 71.2h8M33 73.2h8M42 73.2h4M47 73.2h3M51 73.2h9M61 73.2h2M64 73.2h5M70 73.2h6M77 73.2h4M82 73.2h5M88 73.2h8M97 73.2h1M33 97.2h5M39 97.2h4M33 99.2h3M37 99.2h9M47 99.2h10M58 99.2h8M67 99.2h8M76 99.2h8M85 99.2h8M25 171.2h6M25 173.2h6M25 183.2h5M25 185.2h10M36 185.2h7M25 195.2h34M25 197.2h34M25 207.2h4M25 209.2h4M25 219.2h10M25 221.2h10M25 231.2h10M25 233.2h10M25 243.2h3M29 243.2h5M35 243.2h3M39 243.2h5M45 243.2h9M55 243.2h2M25 245.2h4M30 245.2h7M38 245.2h2M41 245.2h3M45 245.2h2M48 245.2h4M53 245.2h4M33 259.2h4M38 259.2h7M46 259.2h2M49 259.2h4M33 261.2h6M40 261.2h8M49 261.2h2M33 273.2h8M42 273.2h7M50 273.2h9M60 273.2h3M64 273.2h5M33 275.2h10M44 275.2h9M33 287.2h6M33 289.2h5M33 301.2h8M42 301.2h5M33 303.2h10M44 303.2h3M33 315.2h3M37 315.2h5M43 315.2h10M54 315.2h7M62 315.2h4M67 315.2h10M78 315.2h2M81 315.2h10M33 317.2h7M41 317.2h3M45 317.2h6M52 317.2h10M63 317.2h7M71 317.2h4M76 317.2h7M84 317.2h5M90 317.2h3M33 329.2h11M45 329.2h7M53 329.2h5M59 329.2h5M65 329.2h5M71 329.2h8M80 329.2h5M86 329.2h5M92 329.2h6M33 331.2h8M42 331.2h7M50 331.2h3M54 331.2h5M60 331.2h3M64 331.2h5M70 331.2h9M80 331.2h5M86 331.2h7M94 331.2h4M25 347.2h6M25 349.2h6M25 413.2h6M25 415.2h6M33 429.2h5M33 431.2h6M25 447.2h34M25 449.2h34M25 459.2h4M25 461.2h4M25 471.2h10M25 473.2h10M25 483.2h10M25 485.2h10M25 495.2h11M37 495.2h5M25 497.2h11M37 497.2h4M42 497.2h10M53 497.2h4M25 507.2h3M29 507.2h9M39 507.2h4M44 507.2h2M47 507.2h4M52 507.2h4M57 507.2h3M25 509.2h10M36 509.2h3M40 509.2h10M51 509.2h2M54 509.2h7M62 509.2h3M33 523.2h11M45 523.2h10M56 523.2h9M66 523.2h3M70 523.2h10M81 523.2h2M84 523.2h5M90 523.2h5M96 523.2h2M33 525.2h11M45 525.2h5M51 525.2h6M58 525.2h9M68 525.2h10M79 525.2h10M90 525.2h8M33 537.2h9M43 537.2h9M53 537.2h7M61 537.2h4M33 539.2h6M40 539.2h8M49 539.2h3M53 539.2h5M59 539.2h6M66 539.2h3M70 539.2h4M75 539.2h6M33 551.2h7M41 551.2h4M46 551.2h9M56 551.2h5M62 551.2h3M66 551.2h8M75 551.2h9M85 551.2h4M90 551.2h5M96 551.2h2M33 553.2h8M42 553.2h2M45 553.2h7M53 553.2h10M64 553.2h9M74 553.2h9M84 553.2h2M87 553.2h8M96 553.2h2M33 565.2h5M39 565.2h8M48 565.2h6M55 565.2h8M33 567.2h5M39 567.2h10M50 567.2h10M61 567.2h9M71 567.2h7M33 579.2h7M41 579.2h2M44 579.2h5M33 581.2h9M43 581.2h3M47 581.2h6M54 581.2h2M57 581.2h3M61 581.2h6M68 581.2h3M72 581.2h5M78 581.2h3M82 581.2h6M89 581.2h3M93 581.2h5M33 593.2h3M37 593.2h4M42 593.2h5M48 593.2h6M55 593.2h6M62 593.2h10M73 593.2h5M79 593.2h6M86 593.2h9M96 593.2h2M33 595.2h11M45 595.2h9M55 595.2h5M61 595.2h9M71 595.2h3M75 595.2h8M84 595.2h9M94 595.2h4M24 637.2h2M24 643.2h2M25 655.2h6M25 657.2h6" stroke="#3a2a9a" stroke-opacity="0.75" stroke-width="1.05" fill="none"/>
<path d="M20 9.2h6M20 23.2h5M20 37.2h6M20 51.2h6M20 65.2h6M20 79.2h5M24 83.2h10M28 85.2h3M20 91.2h6M12 109.2h12M16 111.2h10M20 113.2h3M12 119.2h11M16 121.2h10M20 123.2h3M12 129.2h4M16 131.2h10M20 133.2h3M12 139.2h7M16 141.2h10M20 143.2h3M12 153.2h13M16 155.2h10M20 157.2h3M12 251.2h10M16 253.2h17M20 267.2h6M20 281.2h10M31 281.2h3M20 295.2h5M26 295.2h2M20 309.2h4M20 323.2h6M20 337.2h4M12 359.2h9M12 361.2h13M12 363.2h13M12 365.2h15M12 367.2h7M12 369.2h6M12 371.2h7M12 373.2h13M12 375.2h13M12 381.2h9M12 383.2h13M12 385.2h13M12 387.2h15M12 389.2h7M12 391.2h6M12 393.2h7M12 395.2h10M12 397.2h12M12 399.2h11M12 401.2h4M12 403.2h13M12 421.2h13M16 423.2h17M20 437.2h5M12 515.2h13M16 517.2h17M20 531.2h4M20 545.2h4M20 559.2h5M26 559.2h4M20 573.2h4M20 587.2h5M20 601.2h8M29 601.2h2M32 601.2h6M24 605.2h10M28 607.2h3M12 617.2h12M12 619.2h11M16 621.2h10M20 623.2h3M12 629.2h4M12 667.2h9M12 669.2h13M12 671.2h13M12 673.2h15M12 675.2h7M12 677.2h6M12 679.2h7M12 681.2h10M12 683.2h13M12 685.2h13M12 691.2h9M12 693.2h13M12 695.2h13M12 697.2h15M12 699.2h7M12 701.2h6M12 703.2h7M12 705.2h13M12 707.2h12M12 709.2h4M12 711.2h13M12 717.2h9M12 719.2h13M12 721.2h13M12 723.2h15M12 725.2h7M12 727.2h6M12 729.2h7M12 731.2h10M12 733.2h13M12 735.2h13M12 741.2h9M12 743.2h13M12 745.2h13M12 747.2h15M12 749.2h7M12 751.2h6M12 753.2h7M12 755.2h13M12 757.2h12M12 759.2h11M12 761.2h4M12 763.2h7M12 769.2h13M12 775.2h9M12 777.2h13M12 779.2h13M12 781.2h15M12 783.2h7M12 785.2h6M12 787.2h7M12 789.2h13M12 791.2h12M12 793.2h11M12 795.2h4M12 797.2h7M12 803.2h13M12 809.2h9M12 811.2h13M12 813.2h13M12 815.2h15M12 817.2h7M12 819.2h6M12 821.2h7M12 823.2h13M12 825.2h12M12 827.2h11M12 829.2h4M12 831.2h7M12 837.2h13M12 843.2h10M16 845.2h3M20 847.2h9M20 849.2h13M20 851.2h13M20 853.2h15M20 855.2h7M20 857.2h6M20 859.2h7M20 861.2h13M20 863.2h12M20 865.2h4M20 867.2h7M20 873.2h13M12 883.2h9M12 885.2h13M12 887.2h13M12 889.2h15M12 891.2h7M12 893.2h6M12 895.2h7M12 897.2h10M12 899.2h13M12 901.2h12M12 903.2h4M12 905.2h7M12 911.2h13M12 917.2h9M12 919.2h13M12 921.2h13M12 923.2h15M12 925.2h7M12 927.2h6M12 929.2h7M12 931.2h10M12 933.2h13M12 935.2h13M12 941.2h9M12 943.2h13M12 945.2h13M12 947.2h15M12 949.2h7M12 951.2h6M12 953.2h7M12 955.2h13M12 957.2h13M12 963.2h9M12 965.2h13M12 967.2h13M12 969.2h15M12 971.2h7M12 973.2h6M12 975.2h7M12 977.2h13M12 979.2h12M12 981.2h11M12 983.2h4M12 985.2h7M12 991.2h13M12 997.2h9M12 999.2h13M12 1001.2h13M12 1003.2h15M12 1005.2h7M12 1007.2h6M12 1009.2h7" stroke="#a31515" stroke-opacity="0.50" stroke-width="1.05" fill="none"/>
<path d="M33 85.2h7M41 85.2h8M50 85.2h7M58 85.2h8M67 85.2h5M73 85.2h4M78 85.2h3M82 85.2h4M87 85.2h4M92 85.2h5M27 361.2h6M27 363.2h34M29 365.2h4M21 371.2h9M31 371.2h9M41 371.2h10M27 373.2h4M32 373.2h4M37 373.2h4M42 373.2h4M47 373.2h2M50 373.2h4M55 373.2h9M65 373.2h4M70 373.2h9M80 373.2h7M88 373.2h4M93 373.2h5M27 383.2h3M31 383.2h6M38 383.2h2M27 385.2h34M29 387.2h4M21 393.2h7M29 393.2h7M24 395.2h6M31 395.2h7M39 395.2h6M46 395.2h10M57 395.2h8M66 395.2h4M71 395.2h2M74 395.2h4M33 607.2h3M37 607.2h3M41 607.2h6M48 607.2h5M27 669.2h5M33 669.2h4M27 671.2h34M29 673.2h4M21 679.2h4M26 679.2h8M35 679.2h12M24 681.2h7M32 681.2h5M38 681.2h6M45 681.2h2M48 681.2h11M27 683.2h5M33 683.2h4M38 683.2h6M45 683.2h9M55 683.2h2M58 683.2h6M65 683.2h7M73 683.2h7M81 683.2h10M92 683.2h6M27 693.2h7M35 693.2h8M27 695.2h34M29 697.2h4M21 703.2h6M28 703.2h5M34 703.2h10M45 703.2h2M48 703.2h3M52 703.2h6M59 703.2h3M63 703.2h4M68 703.2h3M27 705.2h3M31 705.2h8M40 705.2h2M43 705.2h6M50 705.2h6M57 705.2h5M63 705.2h3M67 705.2h10M78 705.2h4M83 705.2h8M92 705.2h6M27 719.2h11M39 719.2h2M27 721.2h34M29 723.2h4M21 729.2h3M25 729.2h5M31 729.2h4M24 731.2h3M28 731.2h2M31 731.2h4M36 731.2h7M44 731.2h3M48 731.2h8M57 731.2h9M67 731.2h10M78 731.2h2M81 731.2h2M84 731.2h6M27 733.2h6M34 733.2h9M44 733.2h6M51 733.2h2M54 733.2h9M64 733.2h3M68 733.2h10M79 733.2h10M90 733.2h3M94 733.2h4M27 743.2h9M37 743.2h3M41 743.2h4M27 745.2h34M29 747.2h4M21 753.2h7M29 753.2h2M32 753.2h5M38 753.2h3M42 753.2h4M47 753.2h6M27 755.2h7M35 755.2h6M42 755.2h4M47 755.2h2M50 755.2h9M60 755.2h2M63 755.2h9M73 755.2h6M80 755.2h3M84 755.2h5M90 755.2h8M27 777.2h8M27 779.2h34M29 781.2h4M21 787.2h7M29 787.2h3M33 787.2h9M43 787.2h2M46 787.2h6M53 787.2h2M27 789.2h4M32 789.2h10M43 789.2h9M53 789.2h6M60 789.2h8M69 789.2h5M75 789.2h5M81 789.2h3M85 789.2h3M89 789.2h4M94 789.2h4M27 811.2h10M27 813.2h34M29 815.2h4M21 821.2h9M31 821.2h2M34 821.2h5M27 823.2h3M31 823.2h9M41 823.2h9M51 823.2h8M60 823.2h6M67 823.2h4M72 823.2h8M81 823.2h7M89 823.2h8M35 849.2h7M43 849.2h7M51 849.2h4M35 851.2h34M37 853.2h4M29 859.2h9M39 859.2h2M35 861.2h4M40 861.2h7M48 861.2h8M57 861.2h6M64 861.2h2M67 861.2h6M74 861.2h3M78 861.2h2M81 861.2h4M27 885.2h6M27 887.2h34M29 889.2h4M21 895.2h6M28 895.2h6M35 895.2h2M24 897.2h11M36 897.2h7M44 897.2h5M50 897.2h7M58 897.2h8M67 897.2h2M70 897.2h4M27 899.2h11M39 899.2h10M50 899.2h5M56 899.2h3M60 899.2h2M63 899.2h8M72 899.2h9M82 899.2h4M87 899.2h6M94 899.2h4M27 919.2h8M27 921.2h34M29 923.2h4M21 929.2h7M29 929.2h8M38 929.2h5M44 929.2h6M51 929.2h2M24 931.2h11M36 931.2h8M45 931.2h3M49 931.2h4M54 931.2h4M59 931.2h3M63 931.2h5M69 931.2h10M80 931.2h9M90 931.2h8M27 933.2h5M33 933.2h10M44 933.2h5M50 933.2h5M56 933.2h3M60 933.2h4M65 933.2h7M73 933.2h10M84 933.2h3M88 933.2h7M96 933.2h2M27 943.2h10M27 945.2h34M29 947.2h4M21 953.2h7M29 953.2h7M37 953.2h2M40 953.2h11M27 955.2h7M35 955.2h7M43 955.2h4M48 955.2h10M59 955.2h10M70 955.2h5M76 955.2h3M80 955.2h6M87 955.2h5M93 955.2h5M27 965.2h10M38 965.2h2M27 967.2h34M29 969.2h4M21 975.2h4M26 975.2h8M35 975.2h10M46 975.2h3M27 977.2h10M38 977.2h5M44 977.2h3M48 977.2h5M54 977.2h4M59 977.2h4M64 977.2h10M75 977.2h3M79 977.2h9M89 977.2h3M93 977.2h5M27 999.2h4M32 999.2h2M27 1001.2h34M29 1003.2h4M21 1009.2h7M29 1009.2h10M40 1009.2h5M46 1009.2h7" stroke="#0451a5" stroke-opacity="0.55" stroke-width="1.05" fill="none"/>
<path d="M25 113.2h1M25 123.2h1M25 133.2h1M24 145.2h2M25 157.2h6M23 359.2h6M21 367.2h10M20 369.2h10M27 375.2h6M23 381.2h6M21 389.2h10M20 391.2h10M26 397.2h1M25 399.2h1M18 401.2h1M27 403.2h6M26 617.2h1M25 623.2h1M18 629.2h1M23 667.2h6M21 675.2h10M20 677.2h10M27 685.2h6M23 691.2h6M21 699.2h10M20 701.2h10M26 707.2h1M18 709.2h1M27 711.2h6M23 717.2h6M21 725.2h10M20 727.2h10M27 735.2h6M23 741.2h6M21 749.2h10M20 751.2h10M26 757.2h1M25 759.2h1M18 761.2h1M16 765.2h2M27 769.2h6M23 775.2h6M21 783.2h10M20 785.2h10M26 791.2h1M25 793.2h1M18 795.2h1M16 799.2h2M27 803.2h6M23 809.2h6M21 817.2h10M20 819.2h10M26 825.2h1M25 827.2h1M18 829.2h1M16 833.2h2M27 837.2h6M31 847.2h6M29 855.2h10M28 857.2h10M34 863.2h1M26 865.2h1M24 869.2h2M35 873.2h6M23 883.2h6M21 891.2h10M20 893.2h10M26 901.2h1M18 903.2h1M16 907.2h2M27 911.2h6M23 917.2h6M21 925.2h10M20 927.2h10M27 935.2h6M23 941.2h6M21 949.2h10M20 951.2h10M27 957.2h6M23 963.2h6M21 971.2h10M20 973.2h10M26 979.2h1M25 981.2h1M18 983.2h1M16 987.2h2M27 991.2h6M23 997.2h6M21 1005.2h10M20 1007.2h10" stroke="#098658" stroke-opacity="0.55" stroke-width="1.05" fill="none"/>
</svg></div>
  <div class="ov" style="left:862px" id="ovL"><i style="left:0px;top:0px;width:13px;height:2px;background:#2a282b"></i><i style="left:0px;top:2px;width:6px;height:4px;background:#a3a3a3"></i><i style="left:6px;top:2px;width:7px;height:4px;background:#bea0d4"></i><i style="left:0px;top:50px;width:13px;height:16px;background:#c5e0dc"></i><i style="left:0px;top:210px;width:13px;height:32px;background:#dfc6ca"></i><i style="left:0px;top:243px;width:13px;height:31px;background:#ba9fd2"></i><i style="left:0px;top:274px;width:13px;height:4.5px;background:#dfc6ca"></i><i style="left:0px;top:278.5px;width:13px;height:47.5px;background:#ba9fd2"></i><i style="left:0px;top:326px;width:13px;height:4px;background:#c5e0dc"></i><i style="left:0px;top:330px;width:13px;height:6px;background:#ba9fd2"></i><i style="left:0px;top:337px;width:13px;height:19.5px;background:#dfc6ca"></i><i style="left:0px;top:358px;width:13px;height:71px;background:#ba9fd2"></i><i style="left:0px;top:447px;width:13px;height:12px;background:#ba9fd2"></i><i style="left:0px;top:461px;width:13px;height:58px;background:#ba9fd2"></i><i style="left:0px;top:519px;width:13px;height:2px;background:#9a86c6"></i><i style="left:0px;top:521px;width:13px;height:4px;background:#c5e0dc"></i><i style="left:0px;top:525px;width:13px;height:6px;background:#dfc6ca"></i><i style="left:0px;top:531px;width:13px;height:12px;background:#ba9fd2"></i><i style="left:0px;top:609px;width:13px;height:15px;background:#c5e0dc"></i><i style="left:0px;top:775px;width:13px;height:13px;background:#dfc6ca"></i><i style="left:0px;top:788px;width:13px;height:11.5px;background:#ba9fd2"></i><i style="left:0px;top:800px;width:13px;height:5px;background:#dfc6ca"></i><i style="left:0px;top:806px;width:13px;height:90px;background:#ba9fd2"></i><i style="left:0px;top:899px;width:13px;height:5px;background:#c5e0dc"></i><i style="left:0px;top:904px;width:13px;height:6px;background:#ba9fd2"></i><i style="left:0px;top:919px;width:13px;height:13px;background:#c5e0dc"></i><i style="left:0px;top:964px;width:6px;height:6px;background:#a0a0a0"></i></div>
</div>
<div class="ed" id="edR" style="left:1126px;width:877px">
<div class="ln" style="top:-8px">371</div>
<div class="cl" style="top:-8px"><i class="ig" style="left:0px"></i><i class="ig" style="left:29px"></i><i class="ig" style="left:58px"></i><span class="tx">            <span class="k">"channelNumber"</span>: <span class="s">"75"</span>,</span></div>
<div class="ln" style="top:10px">372</div>
<div class="cl" style="top:10px"><i class="ig" style="left:0px"></i><i class="ig" style="left:29px"></i><i class="ig" style="left:58px"></i><span class="tx">            <span class="k">"start"</span>: <span class="n">1607521500</span>,</span></div>
<div class="ln" style="top:28px">373</div>
<div class="cl" style="top:28px"><i class="ig" style="left:0px"></i><i class="ig" style="left:29px"></i><i class="ig" style="left:58px"></i><span class="tx">            <span class="k">"stop"</span>: <span class="n">1607525100</span>,</span></div>
<div class="ln" style="top:46px">374</div>
<div class="cl" style="top:46px"><i class="ig" style="left:0px"></i><i class="ig" style="left:29px"></i><i class="ig" style="left:58px"></i><span class="tx">            <span class="k">"title"</span>: <span class="s">"Live aus Bern"</span>,</span></div>
<div class="ln" style="top:64px">375</div>
<div class="cl" style="top:64px"><i class="ig" style="left:0px"></i><i class="ig" style="left:29px"></i><i class="ig" style="left:58px"></i><span class="tx">            <span class="k">"subtitle"</span>: <span class="s">"Medienkonferenz des Bundesamts für Gesundheit (BAG)"</span>,</span></div>
<div class="ln" style="top:82px">376</div>
<div class="cl" style="top:82px"><i class="ig" style="left:0px"></i><i class="ig" style="left:29px"></i><i class="ig" style="left:58px"></i><span class="tx">            <span class="k">"widescreen"</span>: <span class="n">1</span>,</span></div>
<div class="ln" style="top:100px">377</div>
<div class="cl" style="top:100px"><i class="ig" style="left:0px"></i><i class="ig" style="left:29px"></i><i class="ig" style="left:58px"></i><span class="tx">            <span class="k">"subtitled"</span>: <span class="n">1</span>,</span></div>
<div class="ln" style="top:118px">378</div>
<div class="cl" style="top:118px"><i class="ig" style="left:0px"></i><i class="ig" style="left:29px"></i><i class="ig" style="left:58px"></i><span class="tx">            <span class="k">"hd"</span>: <span class="n">1</span>,</span></div>
<div class="ln" style="top:136px">379</div>
<div class="cl" style="top:136px"><i class="ig" style="left:0px"></i><i class="ig" style="left:29px"></i><i class="ig" style="left:58px"></i><span class="tx">            <span class="k">"nextEventId"</span>: <span class="n">896786</span></span></div>
<div class="ln" style="top:154px">380</div>
<div class="cl" style="top:154px"><i class="ig" style="left:0px"></i><i class="ig" style="left:29px"></i><span class="tx">        },</span></div>
<div class="ln" style="top:172px">381</div>
<svg class="fa" style="top:177px" width="12" height="8" viewBox="0 0 12 8"><path d="M1 1.2 L6 6.2 L11 1.2" fill="none" stroke="#424242" stroke-width="1.1"/></svg>
<div class="cl" style="top:172px"><i class="ig" style="left:0px"></i><i class="ig" style="left:29px"></i><span class="tx">        {</span></div>
<div class="ln" style="top:190px">382</div>
<div class="cl ld" style="top:190px"><i class="ig" style="left:0px"></i><i class="ig" style="left:29px"></i><i class="ig" style="left:58px"></i><span class="tx">            <span class="k">"eventId"</span>: <span class="n">859067</span>,</span></div>
<div class="ln" style="top:208px">383</div>
<div class="cl li" style="top:208px"><i class="ig" style="left:0px"></i><i class="ig" style="left:29px"></i><i class="ig" style="left:58px"></i><span class="tx">            <span class="k">"eventId"</span>: <span class="n">869317</span>,</span></div>
<div class="ln" style="top:226px">384</div>
<div class="cl ld" style="top:226px"><i class="ig" style="left:0px"></i><i class="ig" style="left:29px"></i><i class="ig" style="left:58px"></i><span class="tx">            <span class="k">"channelName"</span>: <span class="s">"</span><span class="s cd">ZDF</span><span class="s"> HD"</span>,</span></div>
<div class="ln" style="top:244px">385</div>
<div class="cl li" style="top:244px"><i class="ig" style="left:0px"></i><i class="ig" style="left:29px"></i><i class="ig" style="left:58px"></i><span class="tx">            <span class="k">"channelName"</span>: <span class="s">"</span><span class="s ci">3sat</span><span class="s"> HD"</span>,</span></div>
<div class="ln" style="top:262px">386</div>
<div class="cl ld" style="top:262px"><i class="ig" style="left:0px"></i><i class="ig" style="left:29px"></i><i class="ig" style="left:58px"></i><span class="tx">            <span class="k">"channelUuid"</span>: <span class="s">"534a828dce7e831424090c0697fb9086"</span>,</span></div>
<div class="ln" style="top:280px">387</div>
<div class="cl li" style="top:280px"><i class="ig" style="left:0px"></i><i class="ig" style="left:29px"></i><i class="ig" style="left:58px"></i><span class="tx">            <span class="k">"channelUuid"</span>: <span class="s">"dc5a12a36b3ede8c8049666e24bd12e6"</span>,</span></div>
<div class="ln" style="top:298px">388</div>
<div class="cl ld" style="top:298px"><i class="ig" style="left:0px"></i><i class="ig" style="left:29px"></i><i class="ig" style="left:58px"></i><span class="tx">            <span class="k">"channelNumber"</span>: <span class="s">"42"</span>,</span></div>
<div class="ln" style="top:316px">389</div>
<div class="cl li" style="top:316px"><i class="ig" style="left:0px"></i><i class="ig" style="left:29px"></i><i class="ig" style="left:58px"></i><span class="tx">            <span class="k">"channelNumber"</span>: <span class="s">"56"</span>,</span></div>
<div class="ln" style="top:334px">390</div>
<div class="cl ld" style="top:334px"><i class="ig" style="left:0px"></i><i class="ig" style="left:29px"></i><i class="ig" style="left:58px"></i><span class="tx">            <span class="k">"start"</span>: <span class="n">1607522700</span>,</span></div>
<div class="ln" style="top:352px">391</div>
<div class="cl li" style="top:352px"><i class="ig" style="left:0px"></i><i class="ig" style="left:29px"></i><i class="ig" style="left:58px"></i><span class="tx">            <span class="k">"start"</span>: <span class="n">1607521800</span>,</span></div>
<div class="ln" style="top:370px">392</div>
<div class="cl ld" style="top:370px"><i class="ig" style="left:0px"></i><i class="ig" style="left:29px"></i><i class="ig" style="left:58px"></i><span class="tx">            <span class="k">"stop"</span>: <span class="n">1607526000</span>,</span></div>
<div class="ln" style="top:388px">393</div>
<div class="cl li" style="top:388px"><i class="ig" style="left:0px"></i><i class="ig" style="left:29px"></i><i class="ig" style="left:58px"></i><span class="tx">            <span class="k">"stop"</span>: <span class="n">1607524440</span>,</span></div>
<div class="ln" style="top:406px">394</div>
<div class="cl ld" style="top:406px"><i class="ig" style="left:0px"></i><i class="ig" style="left:29px"></i><i class="ig" style="left:58px"></i><span class="tx">            <span class="k">"title"</span>: <span class="s">"Bares für Rares"</span>,</span></div>
<div class="ln" style="top:424px">395</div>
<div class="cl li" style="top:424px"><i class="ig" style="left:0px"></i><i class="ig" style="left:29px"></i><i class="ig" style="left:58px"></i><span class="tx">            <span class="k">"title"</span>: <span class="s">"Hawaii – Inside Paradise (1/5)"</span>,</span></div>
<div class="ln" style="top:442px">396</div>
<div class="cl ld" style="top:442px"><i class="ig" style="left:0px"></i><i class="ig" style="left:29px"></i><i class="ig" style="left:58px"></i><span class="tx">            <span class="k">"subtitle"</span>: <span class="s">"Die Trödel–Show mit Horst Lichter"</span>,</span></div>
<div class="ln" style="top:460px">397</div>
<div class="cl li" style="top:460px"><i class="ig" style="left:0px"></i><i class="ig" style="left:29px"></i><i class="ig" style="left:58px"></i><span class="tx">            <span class="k">"subtitle"</span>: <span class="s">"Big Island – Gesichter der Feuer–Insel"</span>,</span></div>
<div class="ln" style="top:478px">398</div>
<div class="cl ld" style="top:478px"><i class="ig" style="left:0px"></i><i class="ig" style="left:29px"></i><i class="ig" style="left:58px"></i><span class="tx">            <span class="k">"description"</span>: <span class="s">"</span><span class="s cd">Trödel–Show, Deutschland 2020\nWertvoll oder wertlos? Ob alter Krimskrams oder echte Rarität Horst Lichter"</span></span></div>
<div class="ln" style="top:496px">399</div>
<div class="cl li" style="top:496px"><i class="ig" style="left:0px"></i><i class="ig" style="left:29px"></i><i class="ig" style="left:58px"></i><span class="tx">            <span class="k">"description"</span>: <span class="s">"</span><span class="s ci">USA 2011\nHawaii – das ist für viele Europäer noch immer ein Ort der Sehnsucht und Träume"</span></span></div>
<div class="ln" style="top:514px">400</div>
<div class="cl" style="top:514px"><i class="ig" style="left:0px"></i><i class="ig" style="left:29px"></i><i class="ig" style="left:58px"></i><span class="tx">            <span class="k">"widescreen"</span>: <span class="n">1</span>,</span></div>
<div class="ln" style="top:532px">401</div>
<div class="cl lD" style="top:532px"><i class="ig" style="left:0px"></i><i class="ig" style="left:29px"></i><i class="ig" style="left:58px"></i><span class="tx">            <span class="k">"subtitled"</span>: <span class="n">1</span>,</span></div>
<div class="ln" style="top:550px">402</div>
<div class="cl" style="top:550px"><i class="ig" style="left:0px"></i><i class="ig" style="left:29px"></i><i class="ig" style="left:58px"></i><span class="tx">            <span class="k">"hd"</span>: <span class="n">1</span>,</span></div>
<div class="ln" style="top:568px">403</div>
<svg class="fa" style="top:573px" width="12" height="8" viewBox="0 0 12 8"><path d="M1 1.2 L6 6.2 L11 1.2" fill="none" stroke="#424242" stroke-width="1.1"/></svg>
<div class="cl ld" style="top:568px"><i class="ig" style="left:0px"></i><i class="ig" style="left:29px"></i><i class="ig" style="left:58px"></i><span class="tx">            <span class="k">"genre"</span>: [</span></div>
<div class="ln" style="top:586px">404</div>
<div class="cl ld" style="top:586px"><i class="ig" style="left:0px"></i><i class="ig" style="left:29px"></i><i class="ig" style="left:58px"></i><i class="ig" style="left:87px"></i><span class="tx">                <span class="n">48</span></span></div>
<div class="ln" style="top:604px">405</div>
<div class="cl ld" style="top:604px"><i class="ig" style="left:0px"></i><i class="ig" style="left:29px"></i><i class="ig" style="left:58px"></i><span class="tx">            ],</span></div>
<div class="ln" style="top:622px">406</div>
<svg class="fa" style="top:627px" width="12" height="8" viewBox="0 0 12 8"><path d="M1 1.2 L6 6.2 L11 1.2" fill="none" stroke="#424242" stroke-width="1.1"/></svg>
<div class="cl li" style="top:622px"><i class="ig" style="left:0px"></i><i class="ig" style="left:29px"></i><i class="ig" style="left:58px"></i><span class="tx">            <span class="k">"genre"</span>: [</span></div>
<div class="ln" style="top:640px">407</div>
<div class="cl li" style="top:640px"><i class="ig" style="left:0px"></i><i class="ig" style="left:29px"></i><i class="ig" style="left:58px"></i><i class="ig" style="left:87px"></i><span class="tx">                <span class="n">32</span></span></div>
<div class="ln" style="top:658px">408</div>
<div class="cl li" style="top:658px"><i class="ig" style="left:0px"></i><i class="ig" style="left:29px"></i><i class="ig" style="left:58px"></i><span class="tx">            ],</span></div>
<div class="ln" style="top:676px">409</div>
<div class="cl ld" style="top:676px"><i class="ig" style="left:0px"></i><i class="ig" style="left:29px"></i><i class="ig" style="left:58px"></i><span class="tx">            <span class="k">"nextEventId"</span>: <span class="n">859097</span>,</span></div>
<div class="ln" style="top:694px">410</div>
<div class="cl li" style="top:694px"><i class="ig" style="left:0px"></i><i class="ig" style="left:29px"></i><i class="ig" style="left:58px"></i><span class="tx">            <span class="k">"nextEventId"</span>: <span class="n">899072</span></span></div>
<div class="ln" style="top:712px">411</div>
<div class="cl" style="top:712px"><i class="ig" style="left:0px"></i><i class="ig" style="left:29px"></i><span class="tx">        },</span></div>
<div class="ln" style="top:730px">412</div>
<svg class="fa" style="top:735px" width="12" height="8" viewBox="0 0 12 8"><path d="M1 1.2 L6 6.2 L11 1.2" fill="none" stroke="#424242" stroke-width="1.1"/></svg>
<div class="cl" style="top:730px"><i class="ig" style="left:0px"></i><i class="ig" style="left:29px"></i><span class="tx">        {</span></div>
<div class="ln" style="top:748px">413</div>
<div class="cl" style="top:748px"><i class="ig" style="left:0px"></i><i class="ig" style="left:29px"></i><i class="ig" style="left:58px"></i><span class="tx">            <span class="k">"eventId"</span>: <span class="n">892692</span>,</span></div>
<div class="ln" style="top:766px">414</div>
<div class="cl" style="top:766px"><i class="ig" style="left:0px"></i><i class="ig" style="left:29px"></i><i class="ig" style="left:58px"></i><span class="tx">            <span class="k">"channelName"</span>: <span class="s">"Rai 2 HD"</span>,</span></div>
<div class="ln" style="top:784px">415</div>
<div class="cl" style="top:784px"><i class="ig" style="left:0px"></i><i class="ig" style="left:29px"></i><i class="ig" style="left:58px"></i><span class="tx">            <span class="k">"channelUuid"</span>: <span class="s">"5a9ef4513a365876ea46f9ad0cd56005"</span>,</span></div>
<div class="ln" style="top:802px">416</div>
<div class="cl" style="top:802px"><i class="ig" style="left:0px"></i><i class="ig" style="left:29px"></i><i class="ig" style="left:58px"></i><span class="tx">            <span class="k">"channelNumber"</span>: <span class="s">"62"</span>,</span></div>
<div class="ln" style="top:820px">417</div>
<div class="cl" style="top:820px"><i class="ig" style="left:0px"></i><i class="ig" style="left:29px"></i><i class="ig" style="left:58px"></i><span class="tx">            <span class="k">"start"</span>: <span class="n">1607521800</span>,</span></div>
<div class="ln" style="top:838px">418</div>
<div class="cl" style="top:838px"><i class="ig" style="left:0px"></i><i class="ig" style="left:29px"></i><i class="ig" style="left:58px"></i><span class="tx">            <span class="k">"stop"</span>: <span class="n">1607527200</span>,</span></div>
<div class="ln" style="top:856px">419</div>
<div class="cl" style="top:856px"><i class="ig" style="left:0px"></i><i class="ig" style="left:29px"></i><i class="ig" style="left:58px"></i><span class="tx">            <span class="k">"title"</span>: <span class="s">"Un Natale molto bizzarro"</span>,</span></div>
<div class="ln" style="top:874px">420</div>
<div class="cl" style="top:874px"><i class="ig" style="left:0px"></i><i class="ig" style="left:29px"></i><i class="ig" style="left:58px"></i><span class="tx">            <span class="k">"subtitle"</span>: <span class="s">"TV MOVIE Un Natale molto bizzarro"</span>,</span></div>
<div class="ln" style="top:892px">421</div>
<div class="cl" style="top:892px"><i class="ig" style="left:0px"></i><i class="ig" style="left:29px"></i><i class="ig" style="left:58px"></i><span class="tx">            <span class="k">"description"</span>: <span class="s">"Kate è una pasticcera che non ha modo di godersi il Natale a causa dei troppi impegni di lavoro"</span></span></div>
<div class="ln" style="top:910px">422</div>
<div class="cl" style="top:910px"><i class="ig" style="left:0px"></i><i class="ig" style="left:29px"></i><i class="ig" style="left:58px"></i><span class="tx">            <span class="k">"nextEventId"</span>: <span class="n">892705</span></span></div>
<div class="ln" style="top:928px">423</div>
<div class="cl" style="top:928px"><i class="ig" style="left:0px"></i><i class="ig" style="left:29px"></i><span class="tx">        },</span></div>
<div class="ln" style="top:946px">424</div>
<svg class="fa" style="top:951px" width="12" height="8" viewBox="0 0 12 8"><path d="M1 1.2 L6 6.2 L11 1.2" fill="none" stroke="#424242" stroke-width="1.1"/></svg>
<div class="cl" style="top:946px"><i class="ig" style="left:0px"></i><i class="ig" style="left:29px"></i><span class="tx">        {</span></div>
<div class="ln" style="top:964px">425</div>
<div class="cl" style="top:964px"><i class="ig" style="left:0px"></i><i class="ig" style="left:29px"></i><i class="ig" style="left:58px"></i><span class="tx">            <span class="k">"eventId"</span>: <span class="n">899477</span>,</span></div>
<div class="ln" style="top:982px">426</div>
<div class="cl" style="top:982px"><i class="ig" style="left:0px"></i><i class="ig" style="left:29px"></i><i class="ig" style="left:58px"></i><span class="tx">            <span class="k">"channelName"</span>: <span class="s">"RMC Découverte"</span>,</span></div>
<div class="ln" style="top:1000px">427</div>
<div class="cl" style="top:1000px"><i class="ig" style="left:0px"></i><i class="ig" style="left:29px"></i><i class="ig" style="left:58px"></i><span class="tx">            <span class="k">"channelUuid"</span>: <span class="s">"ca2cefc1f0ccf5523216d7fd626613e2"</span>,</span></div>
  <div class="shadow-top" style="width:877px"></div>
  <div class="hsl" style="left:62px;top:999px;width:34px;height:10px"></div>
  <div class="mmsh" style="left:752px"></div>
  <div class="mm" style="left:758px;width:106px"><svg width="98" height="1009" viewBox="0 0 98 1009" style="position:absolute;left:8px;top:0">
<g shape-rendering="crispEdges">
<rect x="0" y="208" width="98" height="70" fill="#ffd6d6"/>
<rect x="0" y="208" width="8" height="2" fill="#ff6b6b"/>
<rect x="0" y="210" width="12" height="26" fill="#ff6b6b"/>
<rect x="0" y="236" width="16" height="2" fill="#ff6b6b"/>
<rect x="0" y="238" width="12" height="4" fill="#ff6b6b"/>
<rect x="0" y="242" width="8" height="4" fill="#ff6b6b"/>
<rect x="0" y="246" width="12" height="24" fill="#ff6b6b"/>
<rect x="0" y="270" width="16" height="2" fill="#ff6b6b"/>
<rect x="0" y="272" width="12" height="4" fill="#ff6b6b"/>
<rect x="0" y="276" width="8" height="2" fill="#ff6b6b"/>
<rect x="0" y="280" width="98" height="2" fill="#ffd6d6"/>
<rect x="0" y="280" width="12" height="2" fill="#ff7474"/>
<rect x="0" y="282" width="98" height="2" fill="#eef5e4"/>
<rect x="0" y="282" width="12" height="2" fill="#d9e5c0"/>
<rect x="0" y="284" width="98" height="2" fill="#ffd6d6"/>
<rect x="0" y="284" width="12" height="2" fill="#ff7474"/>
<rect x="0" y="286" width="98" height="2" fill="#eef5e4"/>
<rect x="0" y="286" width="12" height="2" fill="#d9e5c0"/>
<rect x="0" y="288" width="98" height="2" fill="#ffd6d6"/>
<rect x="0" y="288" width="12" height="2" fill="#ff7474"/>
<rect x="0" y="290" width="98" height="2" fill="#eef5e4"/>
<rect x="0" y="290" width="12" height="2" fill="#d9e5c0"/>
<rect x="0" y="292" width="98" height="2" fill="#ffd6d6"/>
<rect x="0" y="292" width="12" height="2" fill="#ff7474"/>
<rect x="0" y="294" width="98" height="2" fill="#eef5e4"/>
<rect x="0" y="294" width="12" height="2" fill="#d9e5c0"/>
<rect x="0" y="296" width="98" height="2" fill="#ffd6d6"/>
<rect x="0" y="296" width="12" height="2" fill="#ff7474"/>
<rect x="0" y="298" width="98" height="2" fill="#eef5e4"/>
<rect x="0" y="298" width="12" height="2" fill="#d9e5c0"/>
<rect x="0" y="300" width="98" height="2" fill="#ffd6d6"/>
<rect x="0" y="300" width="12" height="2" fill="#ff7474"/>
<rect x="0" y="302" width="98" height="2" fill="#eef5e4"/>
<rect x="0" y="302" width="12" height="2" fill="#d9e5c0"/>
<rect x="0" y="304" width="98" height="2" fill="#ffd6d6"/>
<rect x="0" y="304" width="12" height="2" fill="#ff7474"/>
<rect x="0" y="306" width="98" height="2" fill="#eef5e4"/>
<rect x="0" y="306" width="12" height="2" fill="#d9e5c0"/>
<rect x="0" y="308" width="98" height="2" fill="#ffd6d6"/>
<rect x="0" y="308" width="12" height="2" fill="#ff6b6b"/>
<rect x="0" y="310" width="98" height="2" fill="#ffd6d6"/>
<rect x="0" y="310" width="12" height="2" fill="#ff7474"/>
<rect x="0" y="312" width="98" height="2" fill="#eef5e4"/>
<rect x="0" y="312" width="12" height="2" fill="#d9e5c0"/>
<rect x="0" y="314" width="98" height="14" fill="#ffd6d6"/>
<rect x="0" y="314" width="12" height="8" fill="#ff6b6b"/>
<rect x="0" y="322" width="16" height="2" fill="#ff6b6b"/>
<rect x="0" y="324" width="12" height="4" fill="#ff6b6b"/>
<rect x="0" y="332" width="98" height="2" fill="#ffd6d6"/>
<rect x="0" y="332" width="12" height="2" fill="#ff7474"/>
<rect x="0" y="334" width="98" height="2" fill="#eef5e4"/>
<rect x="0" y="334" width="12" height="2" fill="#d9e5c0"/>
<rect x="0" y="336" width="98" height="2" fill="#ffd6d6"/>
<rect x="0" y="336" width="12" height="2" fill="#ff7474"/>
<rect x="0" y="338" width="98" height="2" fill="#eef5e4"/>
<rect x="0" y="338" width="12" height="2" fill="#d9e5c0"/>
<rect x="0" y="340" width="98" height="2" fill="#ffd6d6"/>
<rect x="0" y="340" width="12" height="2" fill="#ff7474"/>
<rect x="0" y="342" width="98" height="2" fill="#eef5e4"/>
<rect x="0" y="342" width="12" height="2" fill="#d9e5c0"/>
<rect x="0" y="344" width="98" height="2" fill="#ffd6d6"/>
<rect x="0" y="344" width="12" height="2" fill="#ff7474"/>
<rect x="0" y="346" width="98" height="2" fill="#eef5e4"/>
<rect x="0" y="346" width="12" height="2" fill="#d9e5c0"/>
<rect x="0" y="348" width="98" height="2" fill="#ffd6d6"/>
<rect x="0" y="348" width="12" height="2" fill="#ff7474"/>
<rect x="0" y="350" width="98" height="2" fill="#eef5e4"/>
<rect x="0" y="350" width="12" height="2" fill="#d9e5c0"/>
<rect x="0" y="352" width="98" height="2" fill="#ffd6d6"/>
<rect x="0" y="352" width="12" height="2" fill="#ff7474"/>
<rect x="0" y="354" width="98" height="2" fill="#eef5e4"/>
<rect x="0" y="354" width="12" height="2" fill="#d9e5c0"/>
<rect x="0" y="356" width="98" height="2" fill="#ffd6d6"/>
<rect x="0" y="356" width="12" height="2" fill="#ff7474"/>
<rect x="0" y="358" width="98" height="2" fill="#eef5e4"/>
<rect x="0" y="358" width="12" height="2" fill="#d9e5c0"/>
<rect x="0" y="360" width="98" height="2" fill="#ffd6d6"/>
<rect x="0" y="360" width="12" height="2" fill="#ff7474"/>
<rect x="0" y="362" width="98" height="2" fill="#eef5e4"/>
<rect x="0" y="362" width="12" height="2" fill="#d9e5c0"/>
<rect x="0" y="364" width="98" height="2" fill="#ffd6d6"/>
<rect x="0" y="364" width="12" height="2" fill="#ff7474"/>
<rect x="0" y="366" width="98" height="2" fill="#eef5e4"/>
<rect x="0" y="366" width="12" height="2" fill="#d9e5c0"/>
<rect x="0" y="422" width="98" height="2" fill="#ffd6d6"/>
<rect x="0" y="422" width="12" height="2" fill="#ff7474"/>
<rect x="0" y="424" width="98" height="2" fill="#eef5e4"/>
<rect x="0" y="424" width="12" height="2" fill="#d9e5c0"/>
<rect x="0" y="426" width="98" height="2" fill="#ffd6d6"/>
<rect x="0" y="426" width="12" height="2" fill="#ff7474"/>
<rect x="0" y="428" width="98" height="2" fill="#eef5e4"/>
<rect x="0" y="428" width="12" height="2" fill="#d9e5c0"/>
<rect x="0" y="430" width="98" height="2" fill="#ffd6d6"/>
<rect x="0" y="430" width="12" height="2" fill="#ff7474"/>
<rect x="0" y="432" width="98" height="2" fill="#eef5e4"/>
<rect x="0" y="432" width="12" height="2" fill="#d9e5c0"/>
<rect x="0" y="434" width="98" height="2" fill="#ffd6d6"/>
<rect x="0" y="434" width="12" height="2" fill="#ff7474"/>
<rect x="0" y="436" width="98" height="2" fill="#eef5e4"/>
<rect x="0" y="436" width="12" height="2" fill="#d9e5c0"/>
<rect x="0" y="438" width="98" height="2" fill="#ffd6d6"/>
<rect x="0" y="438" width="12" height="2" fill="#ff7474"/>
<rect x="0" y="440" width="98" height="2" fill="#eef5e4"/>
<rect x="0" y="440" width="12" height="2" fill="#d9e5c0"/>
<rect x="0" y="442" width="98" height="2" fill="#ffd6d6"/>
<rect x="0" y="442" width="12" height="2" fill="#ff7474"/>
<rect x="0" y="444" width="98" height="2" fill="#eef5e4"/>
<rect x="0" y="444" width="12" height="2" fill="#d9e5c0"/>
<rect x="0" y="446" width="98" height="2" fill="#ffd6d6"/>
<rect x="0" y="446" width="12" height="2" fill="#ff7474"/>
<rect x="0" y="448" width="98" height="2" fill="#eef5e4"/>
<rect x="0" y="448" width="12" height="2" fill="#d9e5c0"/>
<rect x="0" y="450" width="98" height="2" fill="#ffd6d6"/>
<rect x="0" y="450" width="12" height="2" fill="#ff7474"/>
<rect x="0" y="452" width="98" height="2" fill="#eef5e4"/>
<rect x="0" y="452" width="12" height="2" fill="#d9e5c0"/>
<rect x="0" y="454" width="98" height="2" fill="#ffd6d6"/>
<rect x="0" y="454" width="12" height="2" fill="#ff7474"/>
<rect x="0" y="456" width="98" height="2" fill="#eef5e4"/>
<rect x="0" y="456" width="12" height="2" fill="#d9e5c0"/>
<rect x="0" y="460" width="98" height="2" fill="#ffd6d6"/>
<rect x="0" y="460" width="12" height="2" fill="#ff6b6b"/>
<rect x="0" y="464" width="98" height="6" fill="#ffd6d6"/>
<rect x="0" y="464" width="12" height="2" fill="#ff7474"/>
<rect x="0" y="466" width="16" height="2" fill="#ff7474"/>
<rect x="0" y="468" width="12" height="2" fill="#ff7474"/>
<rect x="0" y="470" width="98" height="6" fill="#eef5e4"/>
<rect x="0" y="470" width="12" height="2" fill="#d9e5c0"/>
<rect x="0" y="472" width="16" height="2" fill="#d9e5c0"/>
<rect x="0" y="474" width="12" height="2" fill="#d9e5c0"/>
<rect x="0" y="476" width="98" height="2" fill="#ffd6d6"/>
<rect x="0" y="476" width="12" height="2" fill="#ff7474"/>
<rect x="0" y="478" width="98" height="2" fill="#eef5e4"/>
<rect x="0" y="478" width="12" height="2" fill="#d9e5c0"/>
<rect x="0" y="658" width="98" height="32" fill="#f3f7ec"/>
<rect x="0" y="658" width="8" height="2" fill="#d4e0b4"/>
<rect x="0" y="660" width="12" height="22" fill="#d4e0b4"/>
<rect x="0" y="682" width="16" height="2" fill="#d4e0b4"/>
<rect x="0" y="684" width="12" height="4" fill="#d4e0b4"/>
<rect x="0" y="688" width="8" height="2" fill="#d4e0b4"/>
</g>
<path d="M12 1.2h13M12 3.2h13M12 5.2h15M12 7.2h7M12 9.2h6M12 11.2h7M12 13.2h7M12 19.2h13M12 25.2h9M12 27.2h13M12 29.2h13M12 31.2h15M12 33.2h7M12 35.2h6M12 37.2h7M12 39.2h13M12 41.2h12M12 43.2h11M12 45.2h4M12 47.2h13M12 53.2h9M12 55.2h13M12 57.2h13M12 59.2h15M12 61.2h7M12 63.2h6M12 65.2h7M12 67.2h13M12 69.2h12M12 71.2h4M12 73.2h7M12 79.2h13M12 85.2h9M12 87.2h7M12 89.2h13M12 91.2h13M12 93.2h15M12 95.2h7M12 97.2h6M12 99.2h7M12 101.2h13M12 103.2h12M12 105.2h11M12 107.2h7M12 113.2h13M12 119.2h9M12 121.2h13M12 123.2h13M12 125.2h15M12 127.2h7M12 129.2h6M12 131.2h7M12 133.2h13M12 139.2h9M12 141.2h13M12 143.2h13M12 145.2h15M12 147.2h7M12 149.2h6M12 151.2h7M12 153.2h10M12 155.2h13M12 157.2h12M12 159.2h11M12 161.2h4M12 163.2h7M12 169.2h13M12 175.2h9M12 177.2h13M12 179.2h13M12 181.2h15M12 183.2h7M12 185.2h6M12 187.2h7M12 189.2h10M12 191.2h13M12 193.2h12M12 195.2h11M12 197.2h4M12 199.2h7M12 205.2h13M12 283.2h9M12 287.2h13M12 291.2h13M12 295.2h15M12 299.2h7M12 303.2h6M12 307.2h7M12 313.2h13M12 335.2h9M12 339.2h13M12 343.2h13M12 347.2h15M12 351.2h7M12 355.2h6M12 359.2h7M12 363.2h13M12 367.2h13M12 373.2h9M12 375.2h13M12 377.2h13M12 379.2h15M12 381.2h7M12 383.2h6M12 385.2h7M12 387.2h13M12 389.2h13M12 395.2h9M12 397.2h13M12 399.2h13M12 401.2h15M12 403.2h7M12 405.2h6M12 407.2h7M12 409.2h10M12 411.2h12M12 413.2h11M12 415.2h4M12 417.2h13M12 425.2h9M12 429.2h13M12 433.2h13M12 437.2h15M12 441.2h7M12 445.2h6M12 449.2h7M12 453.2h10M12 457.2h13M12 459.2h12M12 463.2h4M12 471.2h7M12 479.2h13M12 485.2h9M12 487.2h13M12 489.2h13M12 491.2h15M12 493.2h7M12 495.2h6M12 497.2h7M12 499.2h10M12 501.2h13M12 503.2h13M12 509.2h9M12 511.2h13M12 513.2h13M12 515.2h15M12 517.2h7M12 519.2h6M12 521.2h7M12 523.2h13M12 525.2h12M12 527.2h4M12 529.2h13M12 535.2h9M12 537.2h13M12 539.2h13M12 541.2h15M12 543.2h7M12 545.2h6M12 547.2h7M12 549.2h10M12 551.2h13M12 553.2h13M12 559.2h9M12 561.2h13M12 563.2h13M12 565.2h15M12 567.2h7M12 569.2h6M12 571.2h7M12 573.2h13M12 575.2h12M12 577.2h11M12 579.2h4M12 581.2h7M12 587.2h13M12 593.2h9M12 595.2h13M12 597.2h13M12 599.2h15M12 601.2h7M12 603.2h6M12 605.2h7M12 607.2h13M12 609.2h12M12 611.2h11M12 613.2h4M12 615.2h7M12 621.2h13M12 627.2h9M12 629.2h13M12 631.2h13M12 633.2h15M12 635.2h7M12 637.2h6M12 639.2h7M12 641.2h13M12 643.2h12M12 645.2h11M12 647.2h4M12 649.2h7M12 655.2h13M12 661.2h9M12 663.2h13M12 665.2h13M12 667.2h15M12 669.2h7M12 671.2h6M12 673.2h7M12 675.2h13M12 677.2h12M12 679.2h4M12 681.2h7M12 687.2h13M12 693.2h9M12 695.2h13M12 697.2h13M12 699.2h15M12 701.2h7M12 703.2h6M12 705.2h7M12 707.2h10M12 709.2h13M12 711.2h12M12 713.2h4M12 715.2h7M12 721.2h13M12 727.2h9M12 729.2h13M12 731.2h13M12 733.2h15M12 735.2h7M12 737.2h6M12 739.2h7M12 741.2h10M12 743.2h13M12 745.2h13M12 751.2h9M12 753.2h13M12 755.2h13M12 757.2h15M12 759.2h7M12 761.2h6M12 763.2h7M12 765.2h13M12 767.2h13M12 773.2h9M12 775.2h13M12 777.2h13M12 779.2h15M12 781.2h7M12 783.2h6M12 785.2h7M12 787.2h13M12 789.2h12M12 791.2h11M12 793.2h4M12 795.2h7M12 801.2h13M12 807.2h9M12 809.2h13M12 811.2h13M12 813.2h15M12 815.2h7M12 817.2h6M12 819.2h7M12 821.2h13M12 823.2h13M12 829.2h9M12 831.2h7M12 833.2h13M12 835.2h13M12 837.2h15M12 839.2h7M12 841.2h6M12 843.2h7M12 845.2h13M12 847.2h12M12 849.2h4M12 851.2h7M12 857.2h13M12 863.2h9M12 865.2h13M12 867.2h13M12 869.2h15M12 871.2h7M12 873.2h6M12 875.2h7M12 877.2h13M12 879.2h12M12 881.2h4M12 883.2h7M12 889.2h13M12 895.2h9M12 897.2h13M12 899.2h13M12 901.2h15M12 903.2h7M12 905.2h6M12 907.2h7M12 909.2h10M12 911.2h13M12 913.2h12M12 915.2h4M12 917.2h7M12 923.2h13M12 929.2h9M12 931.2h13M12 933.2h13M12 935.2h15M12 937.2h7M12 939.2h6M12 941.2h7M12 943.2h13M12 945.2h12M12 947.2h11M12 949.2h4M12 951.2h7M12 957.2h13M12 963.2h9M12 965.2h13M12 967.2h13M12 969.2h15M12 971.2h7M12 973.2h6M12 975.2h7M12 977.2h13M12 979.2h12M12 981.2h11M12 983.2h4M12 985.2h7M12 991.2h13M12 997.2h9M12 999.2h7M12 1001.2h7M12 1003.2h13M12 1005.2h13M12 1007.2h15M12 1009.2h7" stroke="#a31515" stroke-opacity="0.50" stroke-width="1.05" fill="none"/>
<path d="M25 1.2h1M33 1.2h1M25 3.2h1M61 3.2h1M27 5.2h1M33 5.2h1M19 7.2h1M31 7.2h1M18 9.2h1M30 9.2h1M19 11.2h1M66 11.2h1M19 13.2h1M21 13.2h1M12 17.2h2M25 19.2h1M8 21.2h2M8 23.2h1M21 25.2h1M29 25.2h1M25 27.2h1M31 27.2h1M25 29.2h1M61 29.2h1M27 31.2h1M33 31.2h1M19 33.2h1M31 33.2h1M18 35.2h1M30 35.2h1M19 37.2h1M35 37.2h1M25 39.2h1M24 41.2h1M27 41.2h1M23 43.2h1M26 43.2h1M16 45.2h1M19 45.2h1M25 47.2h1M8 49.2h2M8 51.2h1M21 53.2h1M29 53.2h1M25 55.2h1M31 55.2h1M25 57.2h1M61 57.2h1M27 59.2h1M33 59.2h1M19 61.2h1M31 61.2h1M18 63.2h1M30 63.2h1M19 65.2h1M41 65.2h1M25 67.2h1M24 69.2h1M27 69.2h1M16 71.2h1M19 71.2h1M19 73.2h1M21 73.2h1M12 77.2h2M25 79.2h1M8 81.2h2M8 83.2h1M21 85.2h1M29 85.2h1M19 87.2h1M49 87.2h1M25 89.2h1M41 89.2h1M25 91.2h1M61 91.2h1M27 93.2h1M33 93.2h1M19 95.2h1M31 95.2h1M18 97.2h1M30 97.2h1M19 99.2h1M51 99.2h1M25 101.2h1M24 103.2h1M27 103.2h1M23 105.2h1M26 105.2h1M19 107.2h1M21 107.2h1M12 111.2h2M25 113.2h1M8 115.2h2M8 117.2h1M21 119.2h1M29 119.2h1M25 121.2h1M32 121.2h1M25 123.2h1M61 123.2h1M27 125.2h1M33 125.2h1M19 127.2h1M31 127.2h1M18 129.2h1M30 129.2h1M19 131.2h1M43 131.2h1M25 133.2h1M8 135.2h2M8 137.2h1M21 139.2h1M29 139.2h1M25 141.2h1M43 141.2h1M25 143.2h1M61 143.2h1M27 145.2h1M33 145.2h1M19 147.2h1M31 147.2h1M18 149.2h1M30 149.2h1M19 151.2h1M33 151.2h1M22 153.2h1M54 153.2h1M25 155.2h1M24 157.2h1M27 157.2h1M23 159.2h1M26 159.2h1M16 161.2h1M19 161.2h1M19 163.2h1M21 163.2h1M12 167.2h2M25 169.2h1M8 171.2h2M8 173.2h1M21 175.2h1M29 175.2h1M25 177.2h1M41 177.2h1M25 179.2h1M61 179.2h1M27 181.2h1M33 181.2h1M19 183.2h1M31 183.2h1M18 185.2h1M30 185.2h1M19 187.2h1M71 187.2h1M22 189.2h1M54 189.2h1M25 191.2h1M24 193.2h1M27 193.2h1M23 195.2h1M26 195.2h1M16 197.2h1M19 197.2h1M19 199.2h1M21 199.2h1M12 203.2h2M25 205.2h1M8 207.2h2M8 279.2h1M21 283.2h1M29 283.2h1M25 287.2h1M45 287.2h1M25 291.2h1M61 291.2h1M27 295.2h1M33 295.2h1M19 299.2h1M31 299.2h1M18 303.2h1M30 303.2h1M19 307.2h1M33 307.2h1M25 313.2h1M8 329.2h2M8 331.2h1M21 335.2h1M29 335.2h1M25 339.2h1M45 339.2h1M25 343.2h1M61 343.2h1M27 347.2h1M33 347.2h1M19 351.2h1M31 351.2h1M18 355.2h1M30 355.2h1M19 359.2h1M51 359.2h1M25 363.2h1M25 367.2h1M8 369.2h2M8 371.2h1M21 373.2h1M29 373.2h1M25 375.2h1M33 375.2h1M25 377.2h1M61 377.2h1M27 379.2h1M33 379.2h1M19 381.2h1M31 381.2h1M18 383.2h1M30 383.2h1M19 385.2h1M51 385.2h1M25 387.2h1M25 389.2h1M8 391.2h2M8 393.2h1M21 395.2h1M29 395.2h1M25 397.2h1M40 397.2h1M25 399.2h1M61 399.2h1M27 401.2h1M33 401.2h1M19 403.2h1M31 403.2h1M18 405.2h1M30 405.2h1M19 407.2h1M36 407.2h1M22 409.2h1M78 409.2h1M24 411.2h1M27 411.2h1M23 413.2h1M26 413.2h1M16 415.2h1M19 415.2h1M25 417.2h1M8 419.2h2M8 421.2h1M21 425.2h1M29 425.2h1M25 429.2h1M36 429.2h1M25 433.2h1M61 433.2h1M27 437.2h1M33 437.2h1M19 441.2h1M31 441.2h1M18 445.2h1M30 445.2h1M19 449.2h1M54 449.2h1M22 453.2h1M65 453.2h1M25 457.2h1M24 459.2h1M27 459.2h1M16 463.2h1M19 463.2h1M19 471.2h1M21 471.2h1M12 475.2h2M25 479.2h1M8 481.2h2M8 483.2h1M21 485.2h1M29 485.2h1M25 487.2h1M37 487.2h1M25 489.2h1M61 489.2h1M27 491.2h1M33 491.2h1M19 493.2h1M31 493.2h1M18 495.2h1M30 495.2h1M19 497.2h1M47 497.2h1M22 499.2h1M59 499.2h1M25 501.2h1M25 503.2h1M8 505.2h2M8 507.2h1M21 509.2h1M29 509.2h1M25 511.2h1M43 511.2h1M25 513.2h1M61 513.2h1M27 515.2h1M33 515.2h1M19 517.2h1M31 517.2h1M18 519.2h1M30 519.2h1M19 521.2h1M71 521.2h1M25 523.2h1M24 525.2h1M27 525.2h1M16 527.2h1M19 527.2h1M25 529.2h1M8 531.2h2M8 533.2h1M21 535.2h1M29 535.2h1M25 537.2h1M41 537.2h1M25 539.2h1M61 539.2h1M27 541.2h1M33 541.2h1M19 543.2h1M31 543.2h1M18 545.2h1M30 545.2h1M19 547.2h1M35 547.2h1M22 549.2h1M90 549.2h1M25 551.2h1M25 553.2h1M8 555.2h2M8 557.2h1M21 559.2h1M29 559.2h1M25 561.2h1M45 561.2h1M25 563.2h1M61 563.2h1M27 565.2h1M33 565.2h1M19 567.2h1M31 567.2h1M18 569.2h1M30 569.2h1M19 571.2h1M53 571.2h1M25 573.2h1M24 575.2h1M27 575.2h1M23 577.2h1M26 577.2h1M16 579.2h1M19 579.2h1M19 581.2h1M21 581.2h1M12 585.2h2M25 587.2h1M8 589.2h2M8 591.2h1M21 593.2h1M29 593.2h1M25 595.2h1M35 595.2h1M25 597.2h1M61 597.2h1M27 599.2h1M33 599.2h1M19 601.2h1M31 601.2h1M18 603.2h1M30 603.2h1M19 605.2h1M55 605.2h1M25 607.2h1M24 609.2h1M27 609.2h1M23 611.2h1M26 611.2h1M16 613.2h1M19 613.2h1M19 615.2h1M21 615.2h1M12 619.2h2M25 621.2h1M8 623.2h2M8 625.2h1M21 627.2h1M29 627.2h1M25 629.2h1M37 629.2h1M25 631.2h1M61 631.2h1M27 633.2h1M33 633.2h1M19 635.2h1M31 635.2h1M18 637.2h1M30 637.2h1M19 639.2h1M39 639.2h1M25 641.2h1M24 643.2h1M27 643.2h1M23 645.2h1M26 645.2h1M16 647.2h1M19 647.2h1M19 649.2h1M21 649.2h1M12 653.2h2M25 655.2h1M8 657.2h2M8 659.2h1M21 661.2h1M29 661.2h1M25 663.2h1M47 663.2h1M25 665.2h1M61 665.2h1M27 667.2h1M33 667.2h1M19 669.2h1M31 669.2h1M18 671.2h1M30 671.2h1M19 673.2h1M33 673.2h1M25 675.2h1M77 675.2h1M24 677.2h1M27 677.2h1M16 679.2h1M19 679.2h1M19 681.2h1M21 681.2h1M12 685.2h2M25 687.2h1M8 689.2h2M8 691.2h1M21 693.2h1M29 693.2h1M25 695.2h1M33 695.2h1M25 697.2h1M61 697.2h1M27 699.2h1M33 699.2h1M19 701.2h1M31 701.2h1M18 703.2h1M30 703.2h1M19 705.2h1M37 705.2h1M22 707.2h1M74 707.2h1M25 709.2h1M24 711.2h1M27 711.2h1M16 713.2h1M19 713.2h1M19 715.2h1M21 715.2h1M12 719.2h2M25 721.2h1M8 723.2h2M8 725.2h1M21 727.2h1M29 727.2h1M25 729.2h1M35 729.2h1M25 731.2h1M61 731.2h1M27 733.2h1M33 733.2h1M19 735.2h1M31 735.2h1M18 737.2h1M30 737.2h1M19 739.2h1M53 739.2h1M22 741.2h1M25 743.2h1M25 745.2h1M8 747.2h2M8 749.2h1M21 751.2h1M29 751.2h1M25 753.2h1M37 753.2h1M25 755.2h1M61 755.2h1M27 757.2h1M33 757.2h1M19 759.2h1M31 759.2h1M18 761.2h1M30 761.2h1M19 763.2h1M51 763.2h1M25 765.2h1M25 767.2h1M8 769.2h2M8 771.2h1M21 773.2h1M29 773.2h1M25 775.2h1M40 775.2h1M25 777.2h1M61 777.2h1M27 779.2h1M33 779.2h1M19 781.2h1M31 781.2h1M18 783.2h1M30 783.2h1M19 785.2h1M49 785.2h1M25 787.2h1M24 789.2h1M27 789.2h1M23 791.2h1M26 791.2h1M16 793.2h1M19 793.2h1M19 795.2h1M21 795.2h1M12 799.2h2M25 801.2h1M8 803.2h2M8 805.2h1M21 807.2h1M29 807.2h1M25 809.2h1M34 809.2h1M25 811.2h1M61 811.2h1M27 813.2h1M33 813.2h1M19 815.2h1M31 815.2h1M18 817.2h1M30 817.2h1M19 819.2h1M53 819.2h1M25 821.2h1M25 823.2h1M8 825.2h2M8 827.2h1M21 829.2h1M29 829.2h1M19 831.2h1M49 831.2h1M25 833.2h1M39 833.2h1M25 835.2h1M61 835.2h1M27 837.2h1M33 837.2h1M19 839.2h1M31 839.2h1M18 841.2h1M30 841.2h1M19 843.2h1M29 843.2h1M25 845.2h1M24 847.2h1M27 847.2h1M16 849.2h1M19 849.2h1M19 851.2h1M21 851.2h1M12 855.2h2M25 857.2h1M8 859.2h2M8 861.2h1M21 863.2h1M29 863.2h1M25 865.2h1M45 865.2h1M25 867.2h1M61 867.2h1M27 869.2h1M33 869.2h1M19 871.2h1M31 871.2h1M18 873.2h1M30 873.2h1M19 875.2h1M43 875.2h1M25 877.2h1M24 879.2h1M27 879.2h1M16 881.2h1M19 881.2h1M19 883.2h1M21 883.2h1M12 887.2h2M25 889.2h1M8 891.2h2M8 893.2h1M21 895.2h1M29 895.2h1M25 897.2h1M34 897.2h1M25 899.2h1M61 899.2h1M27 901.2h1M33 901.2h1M19 903.2h1M31 903.2h1M18 905.2h1M30 905.2h1M19 907.2h1M29 907.2h1M22 909.2h1M86 909.2h1M25 911.2h1M24 913.2h1M27 913.2h1M16 915.2h1M19 915.2h1M19 917.2h1M21 917.2h1M12 921.2h2M25 923.2h1M8 925.2h2M8 927.2h1M21 929.2h1M29 929.2h1M25 931.2h1M35 931.2h1M25 933.2h1M61 933.2h1M27 935.2h1M33 935.2h1M19 937.2h1M31 937.2h1M18 939.2h1M30 939.2h1M19 941.2h1M35 941.2h1M25 943.2h1M24 945.2h1M27 945.2h1M23 947.2h1M26 947.2h1M16 949.2h1M19 949.2h1M19 951.2h1M21 951.2h1M12 955.2h2M25 957.2h1M8 959.2h2M8 961.2h1M21 963.2h1M29 963.2h1M25 965.2h1M31 965.2h1M25 967.2h1M61 967.2h1M27 969.2h1M33 969.2h1M19 971.2h1M31 971.2h1M18 973.2h1M30 973.2h1M19 975.2h1M26 975.2h1M25 977.2h1M24 979.2h1M27 979.2h1M23 981.2h1M26 981.2h1M16 983.2h1M19 983.2h1M19 985.2h1M21 985.2h1M12 989.2h2M25 991.2h1M8 993.2h2M8 995.2h1M21 997.2h1M29 997.2h1M19 999.2h1M51 999.2h1M19 1001.2h1M55 1001.2h1M25 1003.2h1M33 1003.2h1M25 1005.2h1M61 1005.2h1M27 1007.2h1M33 1007.2h1M19 1009.2h1M31 1009.2h1" stroke="#000000" stroke-opacity="0.30" stroke-width="1.05" fill="none"/>
<path d="M27 1.2h6M27 3.2h34M29 5.2h4M21 11.2h9M31 11.2h3M35 11.2h3M39 11.2h6M46 11.2h3M50 11.2h5M56 11.2h3M60 11.2h6M27 27.2h4M27 29.2h34M29 31.2h4M21 37.2h10M32 37.2h3M27 39.2h6M34 39.2h4M39 39.2h8M48 39.2h9M58 39.2h5M64 39.2h10M75 39.2h3M79 39.2h6M86 39.2h6M93 39.2h5M27 55.2h4M27 57.2h34M29 59.2h4M21 65.2h7M29 65.2h5M35 65.2h6M27 67.2h4M32 67.2h8M41 67.2h6M48 67.2h5M54 67.2h10M65 67.2h10M76 67.2h5M82 67.2h3M86 67.2h9M96 67.2h2M21 87.2h6M28 87.2h3M32 87.2h7M40 87.2h9M27 89.2h5M33 89.2h8M27 91.2h34M29 93.2h4M21 99.2h7M29 99.2h2M32 99.2h3M36 99.2h7M44 99.2h7M27 101.2h3M31 101.2h7M39 101.2h7M47 101.2h4M52 101.2h2M55 101.2h5M61 101.2h6M68 101.2h2M71 101.2h5M77 101.2h2M80 101.2h7M88 101.2h8M97 101.2h1M27 121.2h5M27 123.2h34M29 125.2h4M21 131.2h9M31 131.2h12M27 141.2h5M33 141.2h10M27 143.2h34M29 145.2h4M21 151.2h4M26 151.2h4M31 151.2h2M24 153.2h7M32 153.2h8M41 153.2h6M48 153.2h6M27 155.2h9M37 155.2h2M40 155.2h6M47 155.2h7M55 155.2h8M64 155.2h8M73 155.2h2M76 155.2h7M84 155.2h5M90 155.2h8M27 177.2h5M33 177.2h4M38 177.2h3M27 179.2h34M29 181.2h4M21 187.2h3M25 187.2h10M36 187.2h4M41 187.2h8M50 187.2h3M54 187.2h7M62 187.2h9M24 189.2h5M30 189.2h4M35 189.2h7M43 189.2h6M50 189.2h4M27 191.2h11M39 191.2h4M44 191.2h3M48 191.2h3M52 191.2h8M61 191.2h9M71 191.2h5M77 191.2h6M84 191.2h4M89 191.2h2M92 191.2h6M27 287.2h3M31 287.2h3M35 287.2h3M39 287.2h6M27 291.2h34M29 295.2h4M21 307.2h6M28 307.2h5M27 313.2h11M39 313.2h10M50 313.2h3M54 313.2h6M61 313.2h10M72 313.2h8M81 313.2h7M89 313.2h6M96 313.2h2M27 339.2h7M35 339.2h6M42 339.2h3M27 343.2h34M29 347.2h4M21 359.2h9M31 359.2h10M42 359.2h9M27 363.2h5M33 363.2h2M36 363.2h5M42 363.2h4M47 363.2h9M57 363.2h3M61 363.2h3M65 363.2h4M70 363.2h6M77 363.2h8M86 363.2h6M93 363.2h2M96 363.2h2M27 375.2h3M31 375.2h2M27 377.2h34M29 379.2h4M21 385.2h3M25 385.2h8M34 385.2h4M39 385.2h5M45 385.2h6M27 387.2h3M31 387.2h3M35 387.2h2M38 387.2h10M49 387.2h5M55 387.2h4M60 387.2h8M69 387.2h5M75 387.2h10M86 387.2h10M97 387.2h1M27 397.2h9M37 397.2h3M27 399.2h34M29 401.2h4M21 407.2h10M32 407.2h4M24 409.2h10M35 409.2h4M40 409.2h5M46 409.2h3M50 409.2h6M57 409.2h5M63 409.2h2M66 409.2h3M70 409.2h8M27 429.2h3M31 429.2h5M27 433.2h34M29 437.2h4M21 449.2h11M33 449.2h6M40 449.2h6M47 449.2h7M24 453.2h6M31 453.2h4M36 453.2h7M44 453.2h5M50 453.2h8M59 453.2h6M27 457.2h5M33 457.2h2M36 457.2h2M39 457.2h2M42 457.2h4M47 457.2h2M50 457.2h3M54 457.2h2M57 457.2h3M61 457.2h7M69 457.2h5M75 457.2h10M86 457.2h3M90 457.2h8M27 487.2h7M35 487.2h2M27 489.2h34M29 491.2h4M21 497.2h8M30 497.2h8M39 497.2h8M24 499.2h3M28 499.2h7M36 499.2h6M43 499.2h6M50 499.2h2M53 499.2h6M27 501.2h8M36 501.2h10M47 501.2h9M57 501.2h6M64 501.2h2M67 501.2h8M76 501.2h2M79 501.2h8M88 501.2h10M27 511.2h3M31 511.2h12M27 513.2h34M29 515.2h4M21 521.2h6M28 521.2h6M35 521.2h2M38 521.2h2M41 521.2h7M49 521.2h9M59 521.2h3M63 521.2h8M27 523.2h5M33 523.2h9M43 523.2h7M51 523.2h10M62 523.2h6M69 523.2h4M74 523.2h6M81 523.2h5M87 523.2h5M93 523.2h5M27 537.2h9M37 537.2h4M27 539.2h34M29 541.2h4M21 547.2h9M31 547.2h4M24 549.2h8M33 549.2h5M39 549.2h6M46 549.2h6M53 549.2h8M62 549.2h10M73 549.2h10M84 549.2h6M27 551.2h9M37 551.2h5M43 551.2h9M53 551.2h4M58 551.2h10M69 551.2h2M72 551.2h7M80 551.2h7M88 551.2h10M27 561.2h5M33 561.2h7M41 561.2h4M27 563.2h34M29 565.2h4M21 571.2h6M28 571.2h10M39 571.2h5M45 571.2h8M27 573.2h7M35 573.2h4M40 573.2h4M45 573.2h5M51 573.2h7M59 573.2h10M70 573.2h7M78 573.2h4M83 573.2h5M89 573.2h7M97 573.2h1M27 595.2h8M27 597.2h34M29 599.2h4M21 605.2h6M28 605.2h3M32 605.2h3M36 605.2h6M43 605.2h5M49 605.2h6M27 607.2h10M38 607.2h2M41 607.2h2M44 607.2h8M53 607.2h8M62 607.2h5M68 607.2h10M79 607.2h6M86 607.2h9M96 607.2h2M27 629.2h10M27 631.2h34M29 633.2h4M21 639.2h9M31 639.2h8M27 641.2h7M35 641.2h3M39 641.2h8M48 641.2h5M54 641.2h8M63 641.2h4M68 641.2h6M75 641.2h8M84 641.2h9M94 641.2h4M27 663.2h3M31 663.2h6M38 663.2h9M27 665.2h34M29 667.2h4M21 673.2h6M28 673.2h5M27 675.2h6M34 675.2h10M45 675.2h7M53 675.2h3M57 675.2h9M67 675.2h10M27 695.2h6M27 697.2h34M29 699.2h4M21 705.2h10M32 705.2h5M24 707.2h3M28 707.2h7M36 707.2h10M47 707.2h7M55 707.2h8M64 707.2h10M27 709.2h6M34 709.2h4M39 709.2h8M48 709.2h10M59 709.2h3M63 709.2h7M71 709.2h2M74 709.2h6M81 709.2h6M88 709.2h8M97 709.2h1M27 729.2h8M27 731.2h34M29 733.2h4M21 739.2h11M33 739.2h5M39 739.2h8M48 739.2h5M24 741.2h6M31 741.2h4M36 741.2h4M41 741.2h3M45 741.2h5M51 741.2h9M61 741.2h10M72 741.2h5M78 741.2h4M83 741.2h7M91 741.2h7M27 743.2h8M36 743.2h5M42 743.2h6M49 743.2h8M58 743.2h6M65 743.2h8M74 743.2h4M79 743.2h9M89 743.2h2M92 743.2h6M27 753.2h5M33 753.2h4M27 755.2h34M29 757.2h4M21 763.2h9M31 763.2h2M34 763.2h3M38 763.2h7M46 763.2h5M27 765.2h11M39 765.2h7M47 765.2h2M50 765.2h2M53 765.2h5M59 765.2h3M63 765.2h6M70 765.2h6M77 765.2h3M81 765.2h4M86 765.2h5M92 765.2h4M97 765.2h1M27 775.2h7M35 775.2h5M27 777.2h34M29 779.2h4M21 785.2h10M32 785.2h5M38 785.2h11M27 787.2h4M32 787.2h9M42 787.2h3M46 787.2h10M57 787.2h3M61 787.2h6M68 787.2h8M77 787.2h5M83 787.2h4M88 787.2h9M27 809.2h7M27 811.2h34M29 813.2h4M21 819.2h11M33 819.2h2M36 819.2h4M41 819.2h7M49 819.2h4M27 821.2h10M38 821.2h6M45 821.2h9M55 821.2h7M63 821.2h8M72 821.2h8M81 821.2h3M85 821.2h4M90 821.2h7M21 831.2h5M27 831.2h7M35 831.2h3M39 831.2h7M47 831.2h2M27 833.2h12M27 835.2h34M29 837.2h4M21 843.2h8M27 845.2h11M39 845.2h5M45 845.2h6M52 845.2h8M61 845.2h7M69 845.2h8M78 845.2h6M85 845.2h10M96 845.2h2M27 865.2h11M39 865.2h6M27 867.2h34M29 869.2h4M21 875.2h6M28 875.2h9M38 875.2h5M27 877.2h8M36 877.2h5M42 877.2h7M50 877.2h6M57 877.2h4M62 877.2h3M66 877.2h2M69 877.2h8M78 877.2h10M89 877.2h8M27 897.2h7M27 899.2h34M29 901.2h4M21 907.2h8M24 909.2h5M30 909.2h3M34 909.2h5M40 909.2h2M43 909.2h9M53 909.2h4M58 909.2h3M62 909.2h4M67 909.2h2M70 909.2h8M79 909.2h3M83 909.2h3M27 911.2h8M36 911.2h4M41 911.2h6M48 911.2h10M59 911.2h6M66 911.2h6M73 911.2h4M78 911.2h8M87 911.2h2M90 911.2h7M27 931.2h4M32 931.2h3M27 933.2h34M29 935.2h4M21 941.2h9M31 941.2h4M27 943.2h10M38 943.2h8M47 943.2h10M58 943.2h3M62 943.2h3M66 943.2h9M76 943.2h5M82 943.2h4M87 943.2h2M90 943.2h8M27 965.2h4M27 967.2h34M29 969.2h4M21 975.2h5M27 977.2h5M33 977.2h3M37 977.2h6M44 977.2h10M55 977.2h9M65 977.2h9M75 977.2h6M82 977.2h2M85 977.2h2M88 977.2h2M91 977.2h2M94 977.2h2M97 977.2h1M21 999.2h10M32 999.2h4M37 999.2h4M42 999.2h3M46 999.2h5M21 1001.2h5M27 1001.2h8M36 1001.2h9M46 1001.2h9M27 1003.2h6M27 1005.2h34M29 1007.2h4" stroke="#0451a5" stroke-opacity="0.55" stroke-width="1.05" fill="none"/>
<path d="M21 7.2h10M20 9.2h10M16 15.2h2M27 19.2h6M23 25.2h6M21 33.2h10M20 35.2h10M26 41.2h1M25 43.2h1M18 45.2h1M27 47.2h6M23 53.2h6M21 61.2h10M20 63.2h10M26 69.2h1M18 71.2h1M16 75.2h2M27 79.2h6M23 85.2h6M21 95.2h10M20 97.2h10M26 103.2h1M25 105.2h1M16 109.2h2M27 113.2h6M23 119.2h6M21 127.2h10M20 129.2h10M27 133.2h6M23 139.2h6M21 147.2h10M20 149.2h10M26 157.2h1M25 159.2h1M18 161.2h1M16 165.2h2M27 169.2h6M23 175.2h6M21 183.2h10M20 185.2h10M26 193.2h1M25 195.2h1M18 197.2h1M16 201.2h2M27 205.2h6M23 283.2h6M21 299.2h10M20 303.2h10M23 335.2h6M21 351.2h10M20 355.2h10M27 367.2h6M23 373.2h6M21 381.2h10M20 383.2h10M27 389.2h6M23 395.2h6M21 403.2h10M20 405.2h10M26 411.2h1M25 413.2h1M18 415.2h1M27 417.2h6M23 425.2h6M21 441.2h10M20 445.2h10M26 459.2h1M18 463.2h1M16 473.2h2M27 479.2h6M23 485.2h6M21 493.2h10M20 495.2h10M27 503.2h6M23 509.2h6M21 517.2h10M20 519.2h10M26 525.2h1M18 527.2h1M27 529.2h6M23 535.2h6M21 543.2h10M20 545.2h10M27 553.2h6M23 559.2h6M21 567.2h10M20 569.2h10M26 575.2h1M25 577.2h1M18 579.2h1M16 583.2h2M27 587.2h6M23 593.2h6M21 601.2h10M20 603.2h10M26 609.2h1M25 611.2h1M18 613.2h1M16 617.2h2M27 621.2h6M23 627.2h6M21 635.2h10M20 637.2h10M26 643.2h1M25 645.2h1M18 647.2h1M16 651.2h2M27 655.2h6M23 661.2h6M21 669.2h10M20 671.2h10M26 677.2h1M18 679.2h1M16 683.2h2M27 687.2h6M23 693.2h6M21 701.2h10M20 703.2h10M26 711.2h1M18 713.2h1M16 717.2h2M27 721.2h6M23 727.2h6M21 735.2h10M20 737.2h10M27 745.2h6M23 751.2h6M21 759.2h10M20 761.2h10M27 767.2h6M23 773.2h6M21 781.2h10M20 783.2h10M26 789.2h1M25 791.2h1M18 793.2h1M16 797.2h2M27 801.2h6M23 807.2h6M21 815.2h10M20 817.2h10M27 823.2h6M23 829.2h6M21 839.2h10M20 841.2h10M26 847.2h1M18 849.2h1M16 853.2h2M27 857.2h6M23 863.2h6M21 871.2h10M20 873.2h10M26 879.2h1M18 881.2h1M16 885.2h2M27 889.2h6M23 895.2h6M21 903.2h10M20 905.2h10M26 913.2h1M18 915.2h1M16 919.2h2M27 923.2h6M23 929.2h6M21 937.2h10M20 939.2h10M26 945.2h1M25 947.2h1M18 949.2h1M16 953.2h2M27 957.2h6M23 963.2h6M21 971.2h10M20 973.2h10M26 979.2h1M25 981.2h1M18 983.2h1M16 987.2h2M27 991.2h6M23 997.2h6M21 1009.2h10" stroke="#098658" stroke-opacity="0.55" stroke-width="1.05" fill="none"/>
<path d="M8 209.2h1M12 211.2h9M21 211.2h1M29 211.2h1M12 213.2h7M19 213.2h1M47 213.2h1M12 215.2h7M19 215.2h1M51 215.2h1M12 217.2h13M25 217.2h1M35 217.2h1M12 219.2h13M25 219.2h1M61 219.2h1M12 221.2h15M27 221.2h1M33 221.2h1M12 223.2h7M19 223.2h1M31 223.2h1M12 225.2h6M18 225.2h1M30 225.2h1M12 227.2h7M19 227.2h1M37 227.2h1M12 229.2h13M25 229.2h1M12 231.2h12M24 231.2h1M27 231.2h1M12 233.2h4M16 233.2h1M19 233.2h1M12 235.2h7M19 235.2h1M21 235.2h1M12 239.2h2M12 241.2h13M25 241.2h1M8 243.2h2M8 245.2h1M12 247.2h9M21 247.2h1M29 247.2h1M12 249.2h13M25 249.2h1M35 249.2h1M12 251.2h13M25 251.2h1M61 251.2h1M12 253.2h15M27 253.2h1M33 253.2h1M12 255.2h7M19 255.2h1M31 255.2h1M12 257.2h6M18 257.2h1M30 257.2h1M12 259.2h7M19 259.2h1M61 259.2h1M12 261.2h13M25 261.2h1M12 263.2h12M24 263.2h1M27 263.2h1M12 265.2h11M23 265.2h1M26 265.2h1M12 267.2h4M16 267.2h1M19 267.2h1M12 269.2h7M19 269.2h1M21 269.2h1M12 273.2h2M12 275.2h13M25 275.2h1M8 277.2h2M12 281.2h9M21 281.2h1M29 281.2h1M12 285.2h13M25 285.2h1M43 285.2h1M12 289.2h13M25 289.2h1M61 289.2h1M12 293.2h15M27 293.2h1M33 293.2h1M12 297.2h7M19 297.2h1M31 297.2h1M12 301.2h6M18 301.2h1M30 301.2h1M12 305.2h7M19 305.2h1M49 305.2h1M12 309.2h10M22 309.2h1M12 311.2h13M25 311.2h1M12 315.2h12M24 315.2h1M27 315.2h1M12 317.2h11M23 317.2h1M26 317.2h1M12 319.2h4M16 319.2h1M19 319.2h1M12 321.2h7M19 321.2h1M21 321.2h1M12 325.2h2M12 327.2h13M25 327.2h1M12 333.2h9M21 333.2h1M29 333.2h1M12 337.2h13M25 337.2h1M31 337.2h1M12 341.2h13M25 341.2h1M61 341.2h1M12 345.2h15M27 345.2h1M33 345.2h1M12 349.2h7M19 349.2h1M31 349.2h1M12 353.2h6M18 353.2h1M30 353.2h1M12 357.2h7M19 357.2h1M51 357.2h1M12 361.2h13M25 361.2h1M12 365.2h13M25 365.2h1M12 423.2h9M21 423.2h1M29 423.2h1M12 427.2h13M25 427.2h1M35 427.2h1M12 431.2h13M25 431.2h1M61 431.2h1M12 435.2h15M27 435.2h1M33 435.2h1M12 439.2h7M19 439.2h1M31 439.2h1M12 443.2h6M18 443.2h1M30 443.2h1M12 447.2h7M19 447.2h1M39 447.2h1M12 451.2h10M22 451.2h1M60 451.2h1M12 455.2h13M25 455.2h1M12 461.2h11M23 461.2h1M26 461.2h1M12 465.2h7M19 465.2h1M21 465.2h1M12 469.2h2M12 477.2h13M25 477.2h1" stroke="#e01010" stroke-opacity="0.78" stroke-width="1.05" fill="none"/>
<path d="M23 211.2h6M21 213.2h6M28 213.2h2M31 213.2h8M40 213.2h7M21 215.2h5M27 215.2h8M36 215.2h7M44 215.2h3M48 215.2h3M27 217.2h8M27 219.2h34M29 221.2h4M21 223.2h10M20 225.2h10M21 227.2h6M28 227.2h2M31 227.2h6M27 229.2h3M31 229.2h7M39 229.2h3M43 229.2h8M52 229.2h9M62 229.2h10M73 229.2h6M80 229.2h8M89 229.2h6M96 229.2h2M26 231.2h1M18 233.2h1M16 237.2h2M27 241.2h6M23 247.2h6M27 249.2h3M31 249.2h4M27 251.2h34M29 253.2h4M21 255.2h10M20 257.2h10M21 259.2h10M32 259.2h5M38 259.2h9M48 259.2h9M58 259.2h3M27 261.2h10M38 261.2h8M47 261.2h3M51 261.2h3M55 261.2h4M60 261.2h7M68 261.2h8M77 261.2h7M85 261.2h3M89 261.2h9M26 263.2h1M25 265.2h1M18 267.2h1M16 271.2h2M27 275.2h6M23 281.2h6M27 285.2h9M37 285.2h6M27 289.2h34M29 293.2h4M21 297.2h10M20 301.2h10M21 305.2h5M27 305.2h9M37 305.2h6M44 305.2h5M24 309.2h8M33 309.2h6M40 309.2h4M45 309.2h7M53 309.2h6M60 309.2h9M70 309.2h4M75 309.2h6M82 309.2h10M93 309.2h5M27 311.2h6M34 311.2h6M41 311.2h10M52 311.2h5M58 311.2h7M66 311.2h7M74 311.2h2M77 311.2h5M83 311.2h4M88 311.2h8M97 311.2h1M26 315.2h1M25 317.2h1M18 319.2h1M16 323.2h2M27 327.2h6M23 333.2h6M27 337.2h4M27 341.2h34M29 345.2h4M21 349.2h10M20 353.2h10M21 357.2h3M25 357.2h2M28 357.2h5M34 357.2h4M39 357.2h6M46 357.2h5M27 361.2h3M31 361.2h4M36 361.2h9M46 361.2h5M52 361.2h2M55 361.2h2M58 361.2h2M61 361.2h2M64 361.2h7M72 361.2h6M79 361.2h3M83 361.2h10M94 361.2h4M27 365.2h6M23 423.2h6M27 427.2h8M27 431.2h34M29 435.2h4M21 439.2h10M20 443.2h10M21 447.2h11M33 447.2h6M24 451.2h4M29 451.2h10M40 451.2h2M43 451.2h4M48 451.2h6M55 451.2h5M27 455.2h6M34 455.2h8M43 455.2h10M54 455.2h9M64 455.2h9M74 455.2h10M85 455.2h2M88 455.2h2M91 455.2h7M25 461.2h1M16 467.2h2M27 477.2h6" stroke="#a01848" stroke-opacity="0.75" stroke-width="1.05" fill="none"/>
</svg></div>
  <div class="ov" style="left:863px" id="ovR"><i style="left:0px;top:0px;width:13px;height:2px;background:#2e2426"></i><i style="left:0px;top:2px;width:6px;height:4px;background:#c86464"></i><i style="left:6px;top:2px;width:7px;height:4px;background:#f5a090"></i><i style="left:0px;top:72px;width:13px;height:19px;background:#e9eedb"></i><i style="left:0px;top:311px;width:13px;height:39px;background:#ffa8a8"></i><i style="left:0px;top:350px;width:13px;height:23px;background:#f09e8e"></i><i style="left:0px;top:373px;width:13px;height:7px;background:#ffa8a8"></i><i style="left:0px;top:380px;width:13px;height:23px;background:#f09e8e"></i><i style="left:0px;top:430px;width:13px;height:25px;background:#f09e8e"></i><i style="left:0px;top:455px;width:13px;height:4px;background:#ffa8a8"></i><i style="left:0px;top:459px;width:13px;height:8px;background:#f09e8e"></i><i style="left:0px;top:422px;width:13px;height:63px;background:rgba(100,100,100,.4)"></i><i style="left:0px;top:567px;width:13px;height:18px;background:#e9eedb"></i><i style="left:0px;top:815px;width:13px;height:15px;background:#ffa8a8"></i><i style="left:0px;top:830px;width:13px;height:23px;background:#f09e8e"></i><i style="left:0px;top:853px;width:13px;height:4px;background:#e9eedb"></i><i style="left:0px;top:857px;width:13px;height:6px;background:#f09e8e"></i><i style="left:0px;top:876px;width:13px;height:15px;background:#e9eedb"></i><i style="left:0px;top:942px;width:6px;height:6px;background:#a0a0a0"></i></div>
</div>
<div class="sbar" style="left:249px;width:876px">Compare: Raw DeltaJSON - 86 Changes</div>
<div class="sbar" style="left:1126px;width:877px">DiffReport - 53 Changes</div>
<svg class="abs grip" style="left:1114px;top:1112px" width="10" height="10" viewBox="0 0 10 10"><path d="M2.5 9.6 L8.6 3.5 M6 9.6 L8.6 7" stroke="#000" stroke-width="1"/><path d="M3.5 9.6 L9.6 3.5 M7 9.6 L9.6 7" stroke="#e6e6e6" stroke-width="1"/></svg><svg class="abs grip" style="left:1992px;top:1112px" width="10" height="10" viewBox="0 0 10 10"><path d="M2.5 9.6 L8.6 3.5 M6 9.6 L8.6 7" stroke="#000" stroke-width="1"/><path d="M3.5 9.6 L9.6 3.5 M7 9.6 L9.6 7" stroke="#e6e6e6" stroke-width="1"/></svg>
<div id="vdiv"></div>
<div id="topline"></div>
<div id="rdiv"></div>
<div id="bottomline"></div>

</div>
</body></html>
